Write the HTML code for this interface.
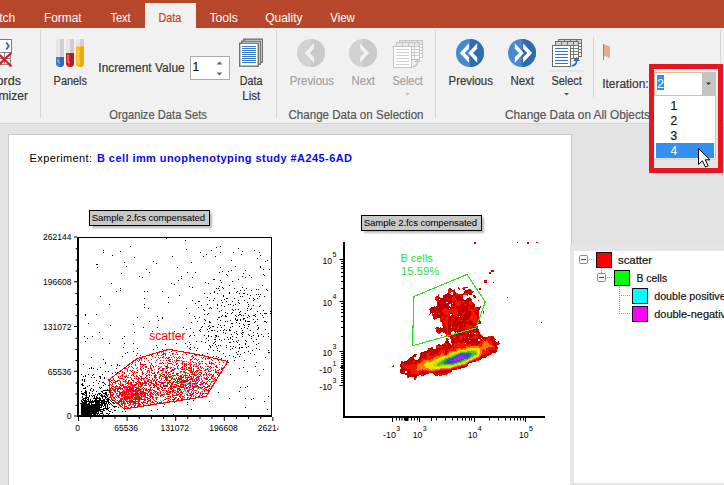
<!DOCTYPE html>
<html><head><meta charset="utf-8"><style>
html,body{margin:0;padding:0;width:724px;height:485px;overflow:hidden;background:#fff}
svg{display:block;font-family:"Liberation Sans",sans-serif}
</style></head><body>
<svg width="724" height="485" viewBox="0 0 724 485">
<rect x="0" y="0" width="724" height="28" fill="#B7472A"/>
<rect x="145" y="3" width="51" height="25" fill="#F1F1F1"/>
<text x="-7.5" y="21.8" font-size="12" fill="#fff" >atch</text>
<text x="44" y="21.8" font-size="12" fill="#FFFFFF" textLength="37.6" lengthAdjust="spacingAndGlyphs" >Format</text>
<text x="110.4" y="21.8" font-size="12" fill="#FFFFFF" textLength="20.3" lengthAdjust="spacingAndGlyphs" >Text</text>
<text x="158.4" y="21.8" font-size="12" fill="#B7472A" stroke="#B7472A" stroke-width="0.2" textLength="22.8" lengthAdjust="spacingAndGlyphs" >Data</text>
<text x="209.5" y="21.8" font-size="12" fill="#FFFFFF" textLength="28.3" lengthAdjust="spacingAndGlyphs" >Tools</text>
<text x="265.2" y="21.8" font-size="12" fill="#FFFFFF" textLength="37.3" lengthAdjust="spacingAndGlyphs" >Quality</text>
<text x="330.3" y="21.8" font-size="12" fill="#FFFFFF" textLength="24.4" lengthAdjust="spacingAndGlyphs" >View</text>
<rect x="0" y="28" width="724" height="96" fill="#F1F1F1"/>
<rect x="0" y="123" width="724" height="1" fill="#D4D4D4"/>
<rect x="40" y="30" width="1" height="88" fill="#D6D6D6"/>
<rect x="276" y="30" width="1" height="88" fill="#D6D6D6"/>
<rect x="435" y="30" width="1" height="88" fill="#D6D6D6"/>
<rect x="593" y="37" width="1" height="60" fill="#D6D6D6"/>
<rect x="720" y="30" width="1" height="88" fill="#D6D6D6"/>
<rect x="-4.5" y="39.5" width="16" height="13" fill="#fff" stroke="#7a7a7a"/>
<path d="M6.2 42.5 L8.8 46 L6.2 49.5" fill="none" stroke="#2E6FBF" stroke-width="1.9"/>
<rect x="-4.5" y="52.5" width="15" height="12" fill="#fff" stroke="#8a8a8a"/>
<path d="M-4 58.5H10M4.5 52.5V64.5" stroke="#8a8a8a" stroke-width="1"/>
<path d="M-2.5 53 L11.5 66.5 M11.2 53 L-2.5 66" stroke="#D0202C" stroke-width="2.4"/>
<text x="-3.5" y="85" font-size="12" fill="#363636" stroke="#363636" stroke-width="0.2" textLength="24.5" lengthAdjust="spacingAndGlyphs" >ords</text>
<text x="-1.5" y="100.2" font-size="12" fill="#363636" stroke="#363636" stroke-width="0.2" textLength="29.5" lengthAdjust="spacingAndGlyphs" >mizer</text>
<path d="M56 39 h8 v24 a4 4 0 0 1 -8 0 z" fill="#E6E6E6"/><path d="M60 39 h4 v24 a4 4 0 0 1 -4 4 z" fill="#CFCFCF"/><path d="M56 57 h8 v6 a4 4 0 0 1 -8 0 z" fill="#3B7CC9"/><path d="M60 57 h4 v6 a4 4 0 0 1 -4 4 z" fill="#2F68B0" opacity="0.9"/><path d="M58 59 v2 a2 2 0 0 0 2 2" fill="none" stroke="#fff" stroke-opacity="0.55" stroke-width="1"/>
<path d="M66 39 h8 v24 a4 4 0 0 1 -8 0 z" fill="#E6E6E6"/><path d="M70 39 h4 v24 a4 4 0 0 1 -4 4 z" fill="#CFCFCF"/><path d="M66 53 h8 v10 a4 4 0 0 1 -8 0 z" fill="#D0252F"/><path d="M70 53 h4 v10 a4 4 0 0 1 -4 4 z" fill="#B01C25" opacity="0.9"/><path d="M68 55 v6 a2 2 0 0 0 2 2" fill="none" stroke="#fff" stroke-opacity="0.55" stroke-width="1"/>
<path d="M76 39 h8 v24 a4 4 0 0 1 -8 0 z" fill="#E6E6E6"/><path d="M80 39 h4 v24 a4 4 0 0 1 -4 4 z" fill="#CFCFCF"/><path d="M76 46.5 h8 v16.5 a4 4 0 0 1 -8 0 z" fill="#FDB913"/><path d="M80 46.5 h4 v16.5 a4 4 0 0 1 -4 4 z" fill="#F0A800" opacity="0.9"/><path d="M78 48.5 v12.5 a2 2 0 0 0 2 2" fill="none" stroke="#fff" stroke-opacity="0.55" stroke-width="1"/>
<text x="53.6" y="84.8" font-size="12" fill="#363636" stroke="#363636" stroke-width="0.2" textLength="33.4" lengthAdjust="spacingAndGlyphs" >Panels</text>
<text x="98.3" y="72" font-size="12" fill="#363636" stroke="#363636" stroke-width="0.2" textLength="86.5" lengthAdjust="spacingAndGlyphs" >Increment Value</text>
<rect x="190.5" y="56.5" width="39" height="23" fill="#fff" stroke="#ABABAB"/>
<text x="192.6" y="70.8" font-size="12" fill="#111" stroke="#111" stroke-width="0.2" >1</text>
<path d="M216.5 64.5 L219.5 61.5 L222.5 64.5 Z" fill="#666"/>
<path d="M216.5 72.5 L219.5 75.5 L222.5 72.5 Z" fill="#666"/>
<rect x="243.7" y="39.2" width="18.6" height="23" fill="#fff" stroke="#737373" stroke-width="1.4"/>
<rect x="241.7" y="41.2" width="18.6" height="23" fill="#fff" stroke="#737373" stroke-width="1.4"/>
<rect x="239.7" y="43.2" width="18.6" height="23" fill="#fff" stroke="#737373" stroke-width="1.4"/>
<path d="M242 46.5h14M242 48.5h14M242 50.5h14M242 52.5h14M242 54.5h14M242 56.5h14M242 58.5h14M242 60.5h14M242 62.5h14" stroke="#3A7BC8" stroke-width="1"/>
<text x="239.8" y="84.8" font-size="12" fill="#363636" stroke="#363636" stroke-width="0.2" textLength="22.7" lengthAdjust="spacingAndGlyphs" >Data</text>
<text x="242.3" y="100.2" font-size="12" fill="#363636" stroke="#363636" stroke-width="0.2" textLength="18" lengthAdjust="spacingAndGlyphs" >List</text>
<text x="109.3" y="119" font-size="12" fill="#565656" stroke="#565656" stroke-width="0.2" textLength="97.6" lengthAdjust="spacingAndGlyphs" >Organize Data Sets</text>
<g transform="translate(311,53)"><circle r="14" fill="#D2D2D2"/><path d="M0 -14 A14 14 0 0 1 0 14 Z" fill="#CACACA"/><path d="M-6.1 0 L2.9000000000000004 -9.7 V-4.3 L-1.3999999999999995 0 L2.9000000000000004 4.3 V9.7 Z" fill="#F3F3F3"/></g>
<g transform="translate(363,53) scale(-1,1)"><circle r="14" fill="#D2D2D2"/><path d="M0 -14 A14 14 0 0 0 0 14 Z" fill="#CACACA"/><path d="M-6.1 0 L2.9000000000000004 -9.7 V-4.3 L-1.3999999999999995 0 L2.9000000000000004 4.3 V9.7 Z" fill="#F3F3F3"/></g>
<text x="289.7" y="84.8" font-size="12" fill="#A3A3A3" stroke="#A3A3A3" stroke-width="0.2" textLength="44.3" lengthAdjust="spacingAndGlyphs" >Previous</text>
<text x="351.5" y="85" font-size="12" fill="#A3A3A3" stroke="#A3A3A3" stroke-width="0.2" textLength="23.4" lengthAdjust="spacingAndGlyphs" >Next</text>
<g transform="translate(393,40)"><rect x="6.5" y="0.5" width="23" height="17" fill="#fff" stroke="#C4C4C4"/><rect x="7" y="1" width="22" height="3" fill="#E6E6E6"/><path d="M7 4.5h22M7 7.5h22M7 10.5h22M7 13.5h22M12.5 1v16M18.5 1v16M24.5 1v16" stroke="#C4C4C4" stroke-width="0.9"/><rect x="3.5" y="2.5" width="23" height="17" fill="#fff" stroke="#C4C4C4"/><rect x="4" y="3" width="22" height="3" fill="#E6E6E6"/><path d="M4 6.5h22M4 9.5h22M4 12.5h22M4 15.5h22M9.5 3v16M15.5 3v16M21.5 3v16" stroke="#C4C4C4" stroke-width="0.9"/><rect x="0.5" y="6.5" width="18" height="21" fill="#fff" stroke="#C4C4C4"/><path d="M3 9.5h13M3 12.5h13M3 15.5h13M3 18.5h13M3 21.5h13M3 24.5h13" stroke="#D0D0D0" stroke-width="1"/><path d="M19.5 27 Q25 26 24.5 21" fill="none" stroke="#C8C8C8" stroke-width="1.6"/><path d="M21 22 L24.5 18 L28 22 Z" fill="#C8C8C8"/></g>
<text x="392.5" y="85" font-size="12" fill="#A3A3A3" stroke="#A3A3A3" stroke-width="0.2" textLength="30.4" lengthAdjust="spacingAndGlyphs" >Select</text>
<path d="M405 93 h5 l-2.5 2.5 z" fill="#BDBDBD"/>
<text x="288.5" y="119" font-size="12" fill="#565656" stroke="#565656" stroke-width="0.2" textLength="135" lengthAdjust="spacingAndGlyphs" >Change Data on Selection</text>
<g transform="translate(470,53)"><circle r="14" fill="#4A88CC"/><path d="M0 -14 A14 14 0 0 1 0 14 Z" fill="#2F6DB0"/><path d="M-10.1 0 L-1.0999999999999996 -9.7 V-4.3 L-5.3999999999999995 0 L-1.0999999999999996 4.3 V9.7 Z" fill="#FFFFFF"/><path d="M-1.8 0 L7.2 -9.7 V-4.3 L2.9000000000000004 0 L7.2 4.3 V9.7 Z" fill="#FFFFFF"/></g>
<g transform="translate(522,53) scale(-1,1)"><circle r="14" fill="#4A88CC"/><path d="M0 -14 A14 14 0 0 0 0 14 Z" fill="#2F6DB0"/><path d="M-10.1 0 L-1.0999999999999996 -9.7 V-4.3 L-5.3999999999999995 0 L-1.0999999999999996 4.3 V9.7 Z" fill="#FFFFFF"/><path d="M-1.8 0 L7.2 -9.7 V-4.3 L2.9000000000000004 0 L7.2 4.3 V9.7 Z" fill="#FFFFFF"/></g>
<text x="448.6" y="84.6" font-size="12" fill="#363636" stroke="#363636" stroke-width="0.2" textLength="44.3" lengthAdjust="spacingAndGlyphs" >Previous</text>
<text x="510.4" y="84.6" font-size="12" fill="#363636" stroke="#363636" stroke-width="0.2" textLength="23.5" lengthAdjust="spacingAndGlyphs" >Next</text>
<g transform="translate(552,39)"><rect x="6.5" y="0.5" width="23" height="17" fill="#fff" stroke="#6E6E6E"/><rect x="7" y="1" width="22" height="3" fill="#D0D0D0"/><path d="M7 4.5h22M7 7.5h22M7 10.5h22M7 13.5h22M12.5 1v16M18.5 1v16M24.5 1v16" stroke="#6E6E6E" stroke-width="0.9"/><rect x="3.5" y="2.5" width="23" height="17" fill="#fff" stroke="#6E6E6E"/><rect x="4" y="3" width="22" height="3" fill="#D0D0D0"/><path d="M4 6.5h22M4 9.5h22M4 12.5h22M4 15.5h22M9.5 3v16M15.5 3v16M21.5 3v16" stroke="#6E6E6E" stroke-width="0.9"/><rect x="0.5" y="6.5" width="18" height="21" fill="#fff" stroke="#6E6E6E"/><path d="M3 9.5h13M3 12.5h13M3 15.5h13M3 18.5h13M3 21.5h13M3 24.5h13" stroke="#3474C4" stroke-width="1"/><path d="M19.5 27 Q25 26 24.5 21" fill="none" stroke="#2A6EC0" stroke-width="1.6"/><path d="M21 22 L24.5 18 L28 22 Z" fill="#2A6EC0"/></g>
<rect x="549" y="70.5" width="35" height="1" fill="#DCDCDC"/>
<text x="551.5" y="84.6" font-size="12" fill="#363636" stroke="#363636" stroke-width="0.2" textLength="30.2" lengthAdjust="spacingAndGlyphs" >Select</text>
<path d="M564 93 h5 l-2.5 2.5 z" fill="#555"/>
<text x="505" y="119" font-size="12" fill="#565656" stroke="#565656" stroke-width="0.2" textLength="145" lengthAdjust="spacingAndGlyphs" >Change Data on All Objects</text>
<rect x="603" y="44" width="1" height="16" fill="#7A8CA0"/>
<path d="M604 44.5 L610 46.5 V58 L604 56 Z" fill="#E9AA88"/>
<text x="602.2" y="88.3" font-size="12" fill="#363636" stroke="#363636" stroke-width="0.2" textLength="46.4" lengthAdjust="spacingAndGlyphs" >Iteration:</text>
<rect x="0" y="124" width="724" height="361" fill="#E3E3E3"/>
<rect x="8" y="134" width="564" height="360" fill="#C9C9C9"/>
<rect x="9" y="135" width="562" height="360" fill="#FFFFFF"/>
<g>
<path d="M166 238h1v1h-1zM185 240h1v1h-1zM130 246h1v1h-1zM220 246h1v1h-1zM216 247h1v1h-1zM238 248h1v1h-1zM186 249h1v1h-1zM271 249h1v1h-1zM103 250h1v1h-1zM211 250h1v1h-1zM254 250h1v1h-1zM120 251h1v1h-1zM242 251h1v1h-1zM271 251h1v1h-1zM103 252h1v1h-1zM200 252h1v1h-1zM220 252h1v1h-1zM233 252h1v1h-1zM259 252h1v1h-1zM206 254h1v1h-1zM241 254h1v1h-1zM112 255h1v1h-1zM260 255h1v1h-1zM172 256h1v1h-1zM203 256h1v1h-1zM215 256h1v1h-1zM134 257h1v1h-1zM257 258h1v1h-1zM271 258h1v1h-1zM271 259h1v1h-1zM231 260h1v1h-1zM267 260h1v1h-1zM153 261h1v1h-1zM265 261h1v1h-1zM124 262h1v1h-1zM191 262h1v1h-1zM156 263h1v1h-1zM96 264h1v1h-1zM97 264h1v1h-1zM126 266h1v1h-1zM235 266h1v1h-1zM260 266h1v1h-1zM97 267h1v1h-1zM177 267h1v1h-1zM220 267h1v1h-1zM260 267h1v1h-1zM146 269h1v1h-1zM263 269h1v1h-1zM269 269h1v1h-1zM231 270h1v1h-1zM245 270h1v1h-1zM222 271h1v1h-1zM228 271h1v1h-1zM149 272h1v1h-1zM187 272h1v1h-1zM195 272h1v1h-1zM219 272h1v1h-1zM121 273h1v1h-1zM243 273h1v1h-1zM271 273h1v1h-1zM226 274h1v1h-1zM263 274h1v1h-1zM271 274h1v1h-1zM227 275h1v1h-1zM249 275h1v1h-1zM264 275h1v1h-1zM139 276h1v1h-1zM181 276h1v1h-1zM242 276h1v1h-1zM142 277h1v1h-1zM192 277h1v1h-1zM245 277h1v1h-1zM251 277h1v1h-1zM181 278h1v1h-1zM213 279h1v1h-1zM214 279h1v1h-1zM238 279h1v1h-1zM271 279h1v1h-1zM178 280h1v1h-1zM220 280h1v1h-1zM232 281h1v1h-1zM271 281h1v1h-1zM205 282h1v1h-1zM221 282h1v1h-1zM111 283h1v1h-1zM171 283h1v1h-1zM208 283h1v1h-1zM271 283h1v1h-1zM174 284h1v1h-1zM229 285h1v1h-1zM262 285h1v1h-1zM189 286h1v1h-1zM219 286h1v1h-1zM192 287h1v1h-1zM222 287h1v1h-1zM242 287h1v1h-1zM271 287h1v1h-1zM120 288h1v1h-1zM216 288h1v1h-1zM218 288h1v1h-1zM223 288h1v1h-1zM234 288h1v1h-1zM246 288h1v1h-1zM256 289h1v1h-1zM258 289h1v1h-1zM266 289h1v1h-1zM271 289h1v1h-1zM120 290h1v1h-1zM219 290h1v1h-1zM240 290h1v1h-1zM244 290h1v1h-1zM251 290h1v1h-1zM267 290h1v1h-1zM271 290h1v1h-1zM116 291h1v1h-1zM144 291h1v1h-1zM147 291h1v1h-1zM162 291h1v1h-1zM214 291h1v1h-1zM237 291h1v1h-1zM214 292h1v1h-1zM229 292h1v1h-1zM236 292h1v1h-1zM271 292h1v1h-1zM204 293h1v1h-1zM210 293h1v1h-1zM217 293h1v1h-1zM229 293h1v1h-1zM239 293h1v1h-1zM243 293h1v1h-1zM244 293h1v1h-1zM247 294h1v1h-1zM256 294h1v1h-1zM258 294h1v1h-1zM260 294h1v1h-1zM179 295h1v1h-1zM223 295h1v1h-1zM250 295h1v1h-1zM100 296h1v1h-1zM223 296h1v1h-1zM240 296h1v1h-1zM242 296h1v1h-1zM259 296h1v1h-1zM264 296h1v1h-1zM168 297h1v1h-1zM207 297h1v1h-1zM144 298h1v1h-1zM214 298h1v1h-1zM226 298h1v1h-1zM227 298h1v1h-1zM234 298h1v1h-1zM249 298h1v1h-1zM253 298h1v1h-1zM257 298h1v1h-1zM224 299h1v1h-1zM254 299h1v1h-1zM192 300h1v1h-1zM209 300h1v1h-1zM213 300h1v1h-1zM221 300h1v1h-1zM238 300h1v1h-1zM244 300h1v1h-1zM253 300h1v1h-1zM271 300h1v1h-1zM198 301h1v1h-1zM199 301h1v1h-1zM226 301h1v1h-1zM232 301h1v1h-1zM168 302h1v1h-1zM222 302h1v1h-1zM238 302h1v1h-1zM247 302h1v1h-1zM195 303h1v1h-1zM239 303h1v1h-1zM109 304h1v1h-1zM144 304h1v1h-1zM207 304h1v1h-1zM217 304h1v1h-1zM228 304h1v1h-1zM230 304h1v1h-1zM235 304h1v1h-1zM248 304h1v1h-1zM271 304h1v1h-1zM201 305h1v1h-1zM217 305h1v1h-1zM221 305h1v1h-1zM233 305h1v1h-1zM253 305h1v1h-1zM260 305h1v1h-1zM271 305h1v1h-1zM224 306h1v1h-1zM248 306h1v1h-1zM259 306h1v1h-1zM271 306h1v1h-1zM144 307h1v1h-1zM198 307h1v1h-1zM210 307h1v1h-1zM148 308h1v1h-1zM186 308h1v1h-1zM209 308h1v1h-1zM211 308h1v1h-1zM217 308h1v1h-1zM247 308h1v1h-1zM251 308h1v1h-1zM271 308h1v1h-1zM203 309h1v1h-1zM232 309h1v1h-1zM235 309h1v1h-1zM238 309h1v1h-1zM250 309h1v1h-1zM204 310h1v1h-1zM221 310h1v1h-1zM233 310h1v1h-1zM247 310h1v1h-1zM263 310h1v1h-1zM271 310h1v1h-1zM219 311h1v1h-1zM240 311h1v1h-1zM257 311h1v1h-1zM270 311h1v1h-1zM225 312h1v1h-1zM232 312h1v1h-1zM239 312h1v1h-1zM189 313h1v1h-1zM208 313h1v1h-1zM227 313h1v1h-1zM231 313h1v1h-1zM245 313h1v1h-1zM260 313h1v1h-1zM264 313h1v1h-1zM265 313h1v1h-1zM266 313h1v1h-1zM270 313h1v1h-1zM85 314h1v1h-1zM96 314h1v1h-1zM204 314h1v1h-1zM207 314h1v1h-1zM239 314h1v1h-1zM240 314h1v1h-1zM255 314h1v1h-1zM271 314h1v1h-1zM85 315h1v1h-1zM222 315h1v1h-1zM225 315h1v1h-1zM235 315h1v1h-1zM238 315h1v1h-1zM241 315h1v1h-1zM243 315h1v1h-1zM248 315h1v1h-1zM253 315h1v1h-1zM254 315h1v1h-1zM262 315h1v1h-1zM157 316h1v1h-1zM194 316h1v1h-1zM221 316h1v1h-1zM225 316h1v1h-1zM226 316h1v1h-1zM236 316h1v1h-1zM249 316h1v1h-1zM255 316h1v1h-1zM137 317h1v1h-1zM162 317h1v1h-1zM199 317h1v1h-1zM218 317h1v1h-1zM219 317h1v1h-1zM247 317h1v1h-1zM263 317h1v1h-1zM162 318h1v1h-1zM195 318h1v1h-1zM235 318h1v1h-1zM243 318h1v1h-1zM244 318h1v1h-1zM204 319h1v1h-1zM217 319h1v1h-1zM235 319h1v1h-1zM237 319h1v1h-1zM240 319h1v1h-1zM243 319h1v1h-1zM253 319h1v1h-1zM257 319h1v1h-1zM271 319h1v1h-1zM158 320h1v1h-1zM205 320h1v1h-1zM220 320h1v1h-1zM230 320h1v1h-1zM236 320h1v1h-1zM237 320h1v1h-1zM240 320h1v1h-1zM245 320h1v1h-1zM149 321h1v1h-1zM197 321h1v1h-1zM209 321h1v1h-1zM225 321h1v1h-1zM227 321h1v1h-1zM245 321h1v1h-1zM247 321h1v1h-1zM248 321h1v1h-1zM249 321h1v1h-1zM255 321h1v1h-1zM264 321h1v1h-1zM265 321h1v1h-1zM271 321h1v1h-1zM191 322h1v1h-1zM209 322h1v1h-1zM210 322h1v1h-1zM236 322h1v1h-1zM254 322h1v1h-1zM266 322h1v1h-1zM88 323h1v1h-1zM204 323h1v1h-1zM231 323h1v1h-1zM232 323h1v1h-1zM239 323h1v1h-1zM133 324h1v1h-1zM218 324h1v1h-1zM243 324h1v1h-1zM248 324h1v1h-1zM249 324h1v1h-1zM110 325h1v1h-1zM209 325h1v1h-1zM220 325h1v1h-1zM224 325h1v1h-1zM244 325h1v1h-1zM257 325h1v1h-1zM271 325h1v1h-1zM202 326h1v1h-1zM208 326h1v1h-1zM212 326h1v1h-1zM213 326h1v1h-1zM232 326h1v1h-1zM239 326h1v1h-1zM248 326h1v1h-1zM143 327h1v1h-1zM157 327h1v1h-1zM183 327h1v1h-1zM201 327h1v1h-1zM210 327h1v1h-1zM217 327h1v1h-1zM221 327h1v1h-1zM230 327h1v1h-1zM244 327h1v1h-1zM258 327h1v1h-1zM190 328h1v1h-1zM209 328h1v1h-1zM241 328h1v1h-1zM247 328h1v1h-1zM258 328h1v1h-1zM186 329h1v1h-1zM200 329h1v1h-1zM207 329h1v1h-1zM224 329h1v1h-1zM229 329h1v1h-1zM257 329h1v1h-1zM265 329h1v1h-1zM271 329h1v1h-1zM199 330h1v1h-1zM211 330h1v1h-1zM212 330h1v1h-1zM214 330h1v1h-1zM220 330h1v1h-1zM223 330h1v1h-1zM226 330h1v1h-1zM229 330h1v1h-1zM230 330h1v1h-1zM242 330h1v1h-1zM250 330h1v1h-1zM152 331h1v1h-1zM174 331h1v1h-1zM200 331h1v1h-1zM208 331h1v1h-1zM217 331h1v1h-1zM236 331h1v1h-1zM99 332h1v1h-1zM134 332h1v1h-1zM193 332h1v1h-1zM223 332h1v1h-1zM234 332h1v1h-1zM242 332h1v1h-1zM243 332h1v1h-1zM253 332h1v1h-1zM225 333h1v1h-1zM236 333h1v1h-1zM241 333h1v1h-1zM257 333h1v1h-1zM268 333h1v1h-1zM271 333h1v1h-1zM231 334h1v1h-1zM237 334h1v1h-1zM242 334h1v1h-1zM248 334h1v1h-1zM261 334h1v1h-1zM271 334h1v1h-1zM190 335h1v1h-1zM194 335h1v1h-1zM204 335h1v1h-1zM208 335h1v1h-1zM215 335h1v1h-1zM216 335h1v1h-1zM249 335h1v1h-1zM253 335h1v1h-1zM258 335h1v1h-1zM84 336h1v1h-1zM92 336h1v1h-1zM124 336h1v1h-1zM189 336h1v1h-1zM208 336h1v1h-1zM211 336h1v1h-1zM216 336h1v1h-1zM218 336h1v1h-1zM232 336h1v1h-1zM242 336h1v1h-1zM251 336h1v1h-1zM258 336h1v1h-1zM263 336h1v1h-1zM268 336h1v1h-1zM215 337h1v1h-1zM227 337h1v1h-1zM230 337h1v1h-1zM236 337h1v1h-1zM271 337h1v1h-1zM87 338h1v1h-1zM102 338h1v1h-1zM122 338h1v1h-1zM206 338h1v1h-1zM230 338h1v1h-1zM251 338h1v1h-1zM214 339h1v1h-1zM215 339h1v1h-1zM219 339h1v1h-1zM224 339h1v1h-1zM228 339h1v1h-1zM232 339h1v1h-1zM256 339h1v1h-1zM270 339h1v1h-1zM208 340h1v1h-1zM221 340h1v1h-1zM238 340h1v1h-1zM245 340h1v1h-1zM85 341h1v1h-1zM196 341h1v1h-1zM201 341h1v1h-1zM215 341h1v1h-1zM233 341h1v1h-1zM236 341h1v1h-1zM246 341h1v1h-1zM253 341h1v1h-1zM189 342h1v1h-1zM205 342h1v1h-1zM214 342h1v1h-1zM229 342h1v1h-1zM230 342h1v1h-1zM237 342h1v1h-1zM109 343h1v1h-1zM124 343h1v1h-1zM133 343h1v1h-1zM176 343h1v1h-1zM185 343h1v1h-1zM213 343h1v1h-1zM245 343h1v1h-1zM258 343h1v1h-1zM165 344h1v1h-1zM190 344h1v1h-1zM215 344h1v1h-1zM239 344h1v1h-1zM245 344h1v1h-1zM256 344h1v1h-1zM271 344h1v1h-1zM156 345h1v1h-1zM209 345h1v1h-1zM212 345h1v1h-1zM218 345h1v1h-1zM220 345h1v1h-1zM226 345h1v1h-1zM187 346h1v1h-1zM210 346h1v1h-1zM216 346h1v1h-1zM230 346h1v1h-1zM233 346h1v1h-1zM248 346h1v1h-1zM271 346h1v1h-1zM123 347h1v1h-1zM157 347h1v1h-1zM190 347h1v1h-1zM194 347h1v1h-1zM210 347h1v1h-1zM226 347h1v1h-1zM235 347h1v1h-1zM239 347h1v1h-1zM241 347h1v1h-1zM242 347h1v1h-1zM246 347h1v1h-1zM137 348h1v1h-1zM189 348h1v1h-1zM197 348h1v1h-1zM217 348h1v1h-1zM232 348h1v1h-1zM239 348h1v1h-1zM256 348h1v1h-1zM153 349h1v1h-1zM162 349h1v1h-1zM190 349h1v1h-1zM208 349h1v1h-1zM230 349h1v1h-1zM259 349h1v1h-1zM271 349h1v1h-1zM164 350h1v1h-1zM196 350h1v1h-1zM213 350h1v1h-1zM217 350h1v1h-1zM252 350h1v1h-1zM268 350h1v1h-1zM133 351h1v1h-1zM160 351h1v1h-1zM181 351h1v1h-1zM219 351h1v1h-1zM238 351h1v1h-1zM248 351h1v1h-1zM127 352h1v1h-1zM236 352h1v1h-1zM244 352h1v1h-1zM268 352h1v1h-1zM269 352h1v1h-1zM125 353h1v1h-1zM137 353h1v1h-1zM153 353h1v1h-1zM207 353h1v1h-1zM223 353h1v1h-1zM250 353h1v1h-1zM271 353h1v1h-1zM149 354h1v1h-1zM150 354h1v1h-1zM202 354h1v1h-1zM237 354h1v1h-1zM240 354h1v1h-1zM254 354h1v1h-1zM136 355h1v1h-1zM140 355h1v1h-1zM229 355h1v1h-1zM122 356h1v1h-1zM213 356h1v1h-1zM216 356h1v1h-1zM225 356h1v1h-1zM233 356h1v1h-1zM239 356h1v1h-1zM91 357h1v1h-1zM218 357h1v1h-1zM235 357h1v1h-1zM265 357h1v1h-1zM221 358h1v1h-1zM103 359h1v1h-1zM133 360h1v1h-1zM227 360h1v1h-1zM234 360h1v1h-1zM244 360h1v1h-1zM271 361h1v1h-1zM105 362h1v1h-1zM228 362h1v1h-1zM256 362h1v1h-1zM105 363h1v1h-1zM83 364h1v1h-1zM117 364h1v1h-1zM111 365h1v1h-1zM117 365h1v1h-1zM119 365h1v1h-1zM255 366h1v1h-1zM91 367h1v1h-1zM100 367h1v1h-1zM243 367h1v1h-1zM89 368h1v1h-1zM91 368h1v1h-1zM93 368h1v1h-1zM116 368h1v1h-1zM239 368h1v1h-1zM271 368h1v1h-1zM97 369h1v1h-1zM263 369h1v1h-1zM120 370h1v1h-1zM105 371h1v1h-1zM108 371h1v1h-1zM247 371h1v1h-1zM115 372h1v1h-1zM117 372h1v1h-1zM112 373h1v1h-1zM81 374h1v1h-1zM88 374h1v1h-1zM93 374h1v1h-1zM102 374h1v1h-1zM230 374h1v1h-1zM271 374h1v1h-1zM85 375h1v1h-1zM92 375h1v1h-1zM259 375h1v1h-1zM83 376h1v1h-1zM85 376h1v1h-1zM99 376h1v1h-1zM100 376h1v1h-1zM91 377h1v1h-1zM94 377h1v1h-1zM100 377h1v1h-1zM104 377h1v1h-1zM100 378h1v1h-1zM104 378h1v1h-1zM82 379h1v1h-1zM84 379h1v1h-1zM108 379h1v1h-1zM271 379h1v1h-1zM82 380h1v1h-1zM84 380h1v1h-1zM96 380h1v1h-1zM271 380h1v1h-1zM84 381h1v1h-1zM99 381h1v1h-1zM271 381h1v1h-1zM93 382h1v1h-1zM102 382h1v1h-1zM103 382h1v1h-1zM271 382h1v1h-1zM82 383h1v1h-1zM98 383h1v1h-1zM104 383h1v1h-1zM81 384h1v1h-1zM82 384h1v1h-1zM105 384h1v1h-1zM271 384h1v1h-1zM82 385h1v1h-1zM83 385h1v1h-1zM89 385h1v1h-1zM93 385h1v1h-1zM103 385h1v1h-1zM108 385h1v1h-1zM87 386h1v1h-1zM247 386h1v1h-1zM85 387h1v1h-1zM99 387h1v1h-1zM101 387h1v1h-1zM240 387h1v1h-1zM245 387h1v1h-1zM83 388h1v1h-1zM84 388h1v1h-1zM85 388h1v1h-1zM91 388h1v1h-1zM100 388h1v1h-1zM90 389h1v1h-1zM93 389h1v1h-1zM107 389h1v1h-1zM85 390h1v1h-1zM90 390h1v1h-1zM93 390h1v1h-1zM103 390h1v1h-1zM104 390h1v1h-1zM105 390h1v1h-1zM106 390h1v1h-1zM107 390h1v1h-1zM108 390h1v1h-1zM109 390h1v1h-1zM81 391h1v1h-1zM85 391h1v1h-1zM86 391h1v1h-1zM92 391h1v1h-1zM96 391h1v1h-1zM101 391h1v1h-1zM102 391h1v1h-1zM109 391h1v1h-1zM239 391h1v1h-1zM84 392h1v1h-1zM85 392h1v1h-1zM86 392h1v1h-1zM89 392h1v1h-1zM102 392h1v1h-1zM105 392h1v1h-1zM106 392h1v1h-1zM109 392h1v1h-1zM218 392h1v1h-1zM271 392h1v1h-1zM81 393h1v1h-1zM82 393h1v1h-1zM83 393h1v1h-1zM85 393h1v1h-1zM86 393h1v1h-1zM89 393h1v1h-1zM92 393h1v1h-1zM98 393h1v1h-1zM99 393h1v1h-1zM100 393h1v1h-1zM103 393h1v1h-1zM104 393h1v1h-1zM105 393h1v1h-1zM106 393h1v1h-1zM271 393h1v1h-1zM82 394h1v1h-1zM83 394h1v1h-1zM84 394h1v1h-1zM86 394h1v1h-1zM95 394h1v1h-1zM97 394h1v1h-1zM99 394h1v1h-1zM101 394h1v1h-1zM105 394h1v1h-1zM106 394h1v1h-1zM108 394h1v1h-1zM110 394h1v1h-1zM271 394h1v1h-1zM85 395h1v1h-1zM86 395h1v1h-1zM89 395h1v1h-1zM91 395h1v1h-1zM93 395h1v1h-1zM94 395h1v1h-1zM97 395h1v1h-1zM100 395h1v1h-1zM101 395h1v1h-1zM102 395h1v1h-1zM104 395h1v1h-1zM106 395h1v1h-1zM107 395h1v1h-1zM110 395h1v1h-1zM271 395h1v1h-1zM82 396h1v1h-1zM86 396h1v1h-1zM89 396h1v1h-1zM92 396h1v1h-1zM94 396h1v1h-1zM96 396h1v1h-1zM101 396h1v1h-1zM102 396h1v1h-1zM103 396h1v1h-1zM104 396h1v1h-1zM105 396h1v1h-1zM107 396h1v1h-1zM268 396h1v1h-1zM82 397h1v1h-1zM85 397h1v1h-1zM86 397h1v1h-1zM87 397h1v1h-1zM88 397h1v1h-1zM94 397h1v1h-1zM96 397h1v1h-1zM97 397h1v1h-1zM99 397h1v1h-1zM102 397h1v1h-1zM105 397h1v1h-1zM106 397h1v1h-1zM109 397h1v1h-1zM110 397h1v1h-1zM83 398h1v1h-1zM84 398h1v1h-1zM85 398h1v1h-1zM86 398h1v1h-1zM88 398h1v1h-1zM93 398h1v1h-1zM94 398h1v1h-1zM95 398h1v1h-1zM96 398h1v1h-1zM97 398h1v1h-1zM98 398h1v1h-1zM99 398h1v1h-1zM100 398h1v1h-1zM102 398h1v1h-1zM105 398h1v1h-1zM107 398h1v1h-1zM108 398h1v1h-1zM229 398h1v1h-1zM245 398h1v1h-1zM253 398h1v1h-1zM82 399h1v1h-1zM83 399h1v1h-1zM85 399h1v1h-1zM87 399h1v1h-1zM88 399h1v1h-1zM90 399h1v1h-1zM95 399h1v1h-1zM96 399h1v1h-1zM99 399h1v1h-1zM100 399h1v1h-1zM103 399h1v1h-1zM104 399h1v1h-1zM106 399h1v1h-1zM107 399h1v1h-1zM108 399h1v1h-1zM109 399h1v1h-1zM251 399h1v1h-1zM81 400h1v1h-1zM83 400h1v1h-1zM84 400h1v1h-1zM85 400h1v1h-1zM86 400h1v1h-1zM88 400h1v1h-1zM90 400h1v1h-1zM92 400h1v1h-1zM94 400h1v1h-1zM95 400h1v1h-1zM96 400h1v1h-1zM97 400h1v1h-1zM98 400h1v1h-1zM99 400h1v1h-1zM100 400h1v1h-1zM101 400h1v1h-1zM102 400h1v1h-1zM103 400h1v1h-1zM104 400h1v1h-1zM107 400h1v1h-1zM108 400h1v1h-1zM110 400h1v1h-1zM112 400h1v1h-1zM193 400h1v1h-1zM81 401h1v1h-1zM82 401h1v1h-1zM84 401h1v1h-1zM85 401h1v1h-1zM86 401h1v1h-1zM87 401h1v1h-1zM88 401h1v1h-1zM89 401h1v1h-1zM90 401h1v1h-1zM91 401h1v1h-1zM92 401h1v1h-1zM93 401h1v1h-1zM94 401h1v1h-1zM95 401h1v1h-1zM96 401h1v1h-1zM97 401h1v1h-1zM98 401h1v1h-1zM99 401h1v1h-1zM101 401h1v1h-1zM102 401h1v1h-1zM103 401h1v1h-1zM104 401h1v1h-1zM105 401h1v1h-1zM106 401h1v1h-1zM107 401h1v1h-1zM108 401h1v1h-1zM111 401h1v1h-1zM209 401h1v1h-1zM264 401h1v1h-1zM82 402h1v1h-1zM83 402h1v1h-1zM84 402h1v1h-1zM85 402h1v1h-1zM86 402h1v1h-1zM89 402h1v1h-1zM90 402h1v1h-1zM91 402h1v1h-1zM92 402h1v1h-1zM93 402h1v1h-1zM95 402h1v1h-1zM96 402h1v1h-1zM97 402h1v1h-1zM98 402h1v1h-1zM99 402h1v1h-1zM100 402h1v1h-1zM101 402h1v1h-1zM102 402h1v1h-1zM103 402h1v1h-1zM104 402h1v1h-1zM106 402h1v1h-1zM108 402h1v1h-1zM109 402h1v1h-1zM112 402h1v1h-1zM113 402h1v1h-1zM174 402h1v1h-1zM187 402h1v1h-1zM80 403h1v1h-1zM81 403h1v1h-1zM82 403h1v1h-1zM83 403h1v1h-1zM84 403h1v1h-1zM85 403h1v1h-1zM86 403h1v1h-1zM88 403h1v1h-1zM89 403h1v1h-1zM91 403h1v1h-1zM95 403h1v1h-1zM96 403h1v1h-1zM97 403h1v1h-1zM98 403h1v1h-1zM99 403h1v1h-1zM101 403h1v1h-1zM102 403h1v1h-1zM103 403h1v1h-1zM104 403h1v1h-1zM105 403h1v1h-1zM106 403h1v1h-1zM108 403h1v1h-1zM110 403h1v1h-1zM113 403h1v1h-1zM114 403h1v1h-1zM81 404h1v1h-1zM82 404h1v1h-1zM83 404h1v1h-1zM84 404h1v1h-1zM85 404h1v1h-1zM86 404h1v1h-1zM87 404h1v1h-1zM88 404h1v1h-1zM89 404h1v1h-1zM91 404h1v1h-1zM92 404h1v1h-1zM93 404h1v1h-1zM94 404h1v1h-1zM95 404h1v1h-1zM96 404h1v1h-1zM97 404h1v1h-1zM98 404h1v1h-1zM99 404h1v1h-1zM100 404h1v1h-1zM101 404h1v1h-1zM102 404h1v1h-1zM104 404h1v1h-1zM105 404h1v1h-1zM107 404h1v1h-1zM109 404h1v1h-1zM111 404h1v1h-1zM164 404h1v1h-1zM187 404h1v1h-1zM81 405h1v1h-1zM82 405h1v1h-1zM83 405h1v1h-1zM84 405h1v1h-1zM85 405h1v1h-1zM86 405h1v1h-1zM87 405h1v1h-1zM88 405h1v1h-1zM89 405h1v1h-1zM90 405h1v1h-1zM91 405h1v1h-1zM92 405h1v1h-1zM93 405h1v1h-1zM94 405h1v1h-1zM95 405h1v1h-1zM96 405h1v1h-1zM97 405h1v1h-1zM98 405h1v1h-1zM99 405h1v1h-1zM100 405h1v1h-1zM101 405h1v1h-1zM102 405h1v1h-1zM104 405h1v1h-1zM105 405h1v1h-1zM107 405h1v1h-1zM112 405h1v1h-1zM81 406h1v1h-1zM82 406h1v1h-1zM83 406h1v1h-1zM84 406h1v1h-1zM85 406h1v1h-1zM86 406h1v1h-1zM87 406h1v1h-1zM88 406h1v1h-1zM89 406h1v1h-1zM90 406h1v1h-1zM91 406h1v1h-1zM92 406h1v1h-1zM93 406h1v1h-1zM94 406h1v1h-1zM95 406h1v1h-1zM96 406h1v1h-1zM97 406h1v1h-1zM98 406h1v1h-1zM99 406h1v1h-1zM101 406h1v1h-1zM103 406h1v1h-1zM105 406h1v1h-1zM107 406h1v1h-1zM113 406h1v1h-1zM114 406h1v1h-1zM115 406h1v1h-1zM116 406h1v1h-1zM163 406h1v1h-1zM81 407h1v1h-1zM82 407h1v1h-1zM83 407h1v1h-1zM84 407h1v1h-1zM85 407h1v1h-1zM86 407h1v1h-1zM87 407h1v1h-1zM88 407h1v1h-1zM89 407h1v1h-1zM90 407h1v1h-1zM91 407h1v1h-1zM92 407h1v1h-1zM93 407h1v1h-1zM94 407h1v1h-1zM95 407h1v1h-1zM96 407h1v1h-1zM97 407h1v1h-1zM98 407h1v1h-1zM99 407h1v1h-1zM100 407h1v1h-1zM101 407h1v1h-1zM105 407h1v1h-1zM107 407h1v1h-1zM109 407h1v1h-1zM114 407h1v1h-1zM118 407h1v1h-1zM245 407h1v1h-1zM81 408h1v1h-1zM82 408h1v1h-1zM83 408h1v1h-1zM84 408h1v1h-1zM85 408h1v1h-1zM86 408h1v1h-1zM87 408h1v1h-1zM88 408h1v1h-1zM89 408h1v1h-1zM90 408h1v1h-1zM91 408h1v1h-1zM92 408h1v1h-1zM93 408h1v1h-1zM94 408h1v1h-1zM95 408h1v1h-1zM96 408h1v1h-1zM97 408h1v1h-1zM98 408h1v1h-1zM99 408h1v1h-1zM103 408h1v1h-1zM104 408h1v1h-1zM105 408h1v1h-1zM106 408h1v1h-1zM107 408h1v1h-1zM108 408h1v1h-1zM81 409h1v1h-1zM82 409h1v1h-1zM83 409h1v1h-1zM84 409h1v1h-1zM85 409h1v1h-1zM86 409h1v1h-1zM87 409h1v1h-1zM88 409h1v1h-1zM89 409h1v1h-1zM90 409h1v1h-1zM91 409h1v1h-1zM92 409h1v1h-1zM93 409h1v1h-1zM94 409h1v1h-1zM95 409h1v1h-1zM96 409h1v1h-1zM97 409h1v1h-1zM98 409h1v1h-1zM99 409h1v1h-1zM100 409h1v1h-1zM101 409h1v1h-1zM102 409h1v1h-1zM103 409h1v1h-1zM106 409h1v1h-1zM107 409h1v1h-1zM111 409h1v1h-1zM157 409h1v1h-1zM191 409h1v1h-1zM267 409h1v1h-1zM81 410h1v1h-1zM82 410h1v1h-1zM83 410h1v1h-1zM84 410h1v1h-1zM85 410h1v1h-1zM86 410h1v1h-1zM87 410h1v1h-1zM88 410h1v1h-1zM89 410h1v1h-1zM90 410h1v1h-1zM91 410h1v1h-1zM92 410h1v1h-1zM93 410h1v1h-1zM94 410h1v1h-1zM95 410h1v1h-1zM96 410h1v1h-1zM97 410h1v1h-1zM98 410h1v1h-1zM99 410h1v1h-1zM100 410h1v1h-1zM103 410h1v1h-1zM104 410h1v1h-1zM108 410h1v1h-1zM114 410h1v1h-1zM115 410h1v1h-1zM151 410h1v1h-1zM81 411h1v1h-1zM82 411h1v1h-1zM83 411h1v1h-1zM84 411h1v1h-1zM85 411h1v1h-1zM86 411h1v1h-1zM87 411h1v1h-1zM88 411h1v1h-1zM89 411h1v1h-1zM90 411h1v1h-1zM91 411h1v1h-1zM92 411h1v1h-1zM93 411h1v1h-1zM94 411h1v1h-1zM95 411h1v1h-1zM96 411h1v1h-1zM97 411h1v1h-1zM98 411h1v1h-1zM100 411h1v1h-1zM101 411h1v1h-1zM102 411h1v1h-1zM109 411h1v1h-1zM110 411h1v1h-1zM122 411h1v1h-1zM125 411h1v1h-1zM81 412h1v1h-1zM82 412h1v1h-1zM83 412h1v1h-1zM84 412h1v1h-1zM85 412h1v1h-1zM86 412h1v1h-1zM87 412h1v1h-1zM88 412h1v1h-1zM89 412h1v1h-1zM90 412h1v1h-1zM91 412h1v1h-1zM92 412h1v1h-1zM93 412h1v1h-1zM94 412h1v1h-1zM95 412h1v1h-1zM96 412h1v1h-1zM98 412h1v1h-1zM102 412h1v1h-1zM112 412h1v1h-1zM81 413h1v1h-1zM82 413h1v1h-1zM83 413h1v1h-1zM84 413h1v1h-1zM85 413h1v1h-1zM86 413h1v1h-1zM87 413h1v1h-1zM88 413h1v1h-1zM89 413h1v1h-1zM90 413h1v1h-1zM91 413h1v1h-1zM92 413h1v1h-1zM93 413h1v1h-1zM94 413h1v1h-1zM95 413h1v1h-1zM96 413h1v1h-1zM97 413h1v1h-1zM98 413h1v1h-1zM100 413h1v1h-1zM101 413h1v1h-1zM102 413h1v1h-1zM106 413h1v1h-1zM107 413h1v1h-1zM109 413h1v1h-1zM81 414h1v1h-1zM82 414h1v1h-1zM83 414h1v1h-1zM84 414h1v1h-1zM85 414h1v1h-1zM86 414h1v1h-1zM87 414h1v1h-1zM88 414h1v1h-1zM89 414h1v1h-1zM90 414h1v1h-1zM91 414h1v1h-1zM93 414h1v1h-1zM94 414h1v1h-1zM95 414h1v1h-1zM97 414h1v1h-1zM99 414h1v1h-1zM103 414h1v1h-1zM108 414h1v1h-1zM173 414h1v1h-1zM81 415h1v1h-1zM82 415h1v1h-1zM83 415h1v1h-1zM84 415h1v1h-1zM85 415h1v1h-1zM86 415h1v1h-1zM87 415h1v1h-1zM88 415h1v1h-1zM89 415h1v1h-1zM90 415h1v1h-1zM91 415h1v1h-1zM92 415h1v1h-1zM93 415h1v1h-1zM94 415h1v1h-1zM95 415h1v1h-1zM96 415h1v1h-1zM98 415h1v1h-1zM99 415h1v1h-1zM100 415h1v1h-1zM102 415h1v1h-1zM132 415h1v1h-1z" fill="#000"/>
<path d="M166 350h1v1h-1zM163 351h1v1h-1zM171 351h1v1h-1zM178 351h1v1h-1zM161 352h1v1h-1zM169 352h1v1h-1zM176 352h1v1h-1zM183 352h1v1h-1zM155 353h1v1h-1zM157 353h1v1h-1zM163 353h1v1h-1zM164 353h1v1h-1zM165 353h1v1h-1zM172 353h1v1h-1zM173 353h1v1h-1zM151 354h1v1h-1zM157 354h1v1h-1zM162 354h1v1h-1zM163 354h1v1h-1zM165 354h1v1h-1zM172 354h1v1h-1zM175 354h1v1h-1zM177 354h1v1h-1zM182 354h1v1h-1zM186 354h1v1h-1zM194 354h1v1h-1zM151 355h1v1h-1zM156 355h1v1h-1zM158 355h1v1h-1zM165 355h1v1h-1zM170 355h1v1h-1zM192 355h1v1h-1zM195 355h1v1h-1zM196 355h1v1h-1zM199 355h1v1h-1zM152 356h1v1h-1zM163 356h1v1h-1zM173 356h1v1h-1zM179 356h1v1h-1zM191 356h1v1h-1zM155 357h1v1h-1zM158 357h1v1h-1zM160 357h1v1h-1zM162 357h1v1h-1zM163 357h1v1h-1zM166 357h1v1h-1zM168 357h1v1h-1zM169 357h1v1h-1zM171 357h1v1h-1zM174 357h1v1h-1zM176 357h1v1h-1zM178 357h1v1h-1zM180 357h1v1h-1zM182 357h1v1h-1zM193 357h1v1h-1zM201 357h1v1h-1zM203 357h1v1h-1zM140 358h1v1h-1zM141 358h1v1h-1zM144 358h1v1h-1zM146 358h1v1h-1zM159 358h1v1h-1zM165 358h1v1h-1zM167 358h1v1h-1zM168 358h1v1h-1zM177 358h1v1h-1zM179 358h1v1h-1zM183 358h1v1h-1zM195 358h1v1h-1zM202 358h1v1h-1zM205 358h1v1h-1zM207 358h1v1h-1zM208 358h1v1h-1zM209 358h1v1h-1zM136 359h1v1h-1zM139 359h1v1h-1zM141 359h1v1h-1zM151 359h1v1h-1zM170 359h1v1h-1zM172 359h1v1h-1zM176 359h1v1h-1zM190 359h1v1h-1zM191 359h1v1h-1zM194 359h1v1h-1zM196 359h1v1h-1zM198 359h1v1h-1zM205 359h1v1h-1zM211 359h1v1h-1zM218 359h1v1h-1zM135 360h1v1h-1zM137 360h1v1h-1zM139 360h1v1h-1zM148 360h1v1h-1zM156 360h1v1h-1zM160 360h1v1h-1zM163 360h1v1h-1zM166 360h1v1h-1zM168 360h1v1h-1zM169 360h1v1h-1zM174 360h1v1h-1zM176 360h1v1h-1zM177 360h1v1h-1zM178 360h1v1h-1zM179 360h1v1h-1zM181 360h1v1h-1zM190 360h1v1h-1zM197 360h1v1h-1zM212 360h1v1h-1zM218 360h1v1h-1zM222 360h1v1h-1zM138 361h1v1h-1zM144 361h1v1h-1zM169 361h1v1h-1zM170 361h1v1h-1zM172 361h1v1h-1zM176 361h1v1h-1zM182 361h1v1h-1zM183 361h1v1h-1zM184 361h1v1h-1zM186 361h1v1h-1zM192 361h1v1h-1zM199 361h1v1h-1zM201 361h1v1h-1zM202 361h1v1h-1zM227 361h1v1h-1zM132 362h1v1h-1zM135 362h1v1h-1zM149 362h1v1h-1zM155 362h1v1h-1zM162 362h1v1h-1zM167 362h1v1h-1zM173 362h1v1h-1zM175 362h1v1h-1zM182 362h1v1h-1zM188 362h1v1h-1zM190 362h1v1h-1zM193 362h1v1h-1zM198 362h1v1h-1zM209 362h1v1h-1zM211 362h1v1h-1zM215 362h1v1h-1zM219 362h1v1h-1zM223 362h1v1h-1zM132 363h1v1h-1zM140 363h1v1h-1zM151 363h1v1h-1zM159 363h1v1h-1zM160 363h1v1h-1zM161 363h1v1h-1zM163 363h1v1h-1zM165 363h1v1h-1zM168 363h1v1h-1zM169 363h1v1h-1zM170 363h1v1h-1zM171 363h1v1h-1zM176 363h1v1h-1zM177 363h1v1h-1zM181 363h1v1h-1zM182 363h1v1h-1zM184 363h1v1h-1zM186 363h1v1h-1zM196 363h1v1h-1zM199 363h1v1h-1zM200 363h1v1h-1zM202 363h1v1h-1zM205 363h1v1h-1zM209 363h1v1h-1zM211 363h1v1h-1zM212 363h1v1h-1zM213 363h1v1h-1zM129 364h1v1h-1zM131 364h1v1h-1zM135 364h1v1h-1zM140 364h1v1h-1zM141 364h1v1h-1zM142 364h1v1h-1zM143 364h1v1h-1zM144 364h1v1h-1zM145 364h1v1h-1zM151 364h1v1h-1zM167 364h1v1h-1zM172 364h1v1h-1zM176 364h1v1h-1zM182 364h1v1h-1zM184 364h1v1h-1zM185 364h1v1h-1zM186 364h1v1h-1zM188 364h1v1h-1zM190 364h1v1h-1zM191 364h1v1h-1zM194 364h1v1h-1zM199 364h1v1h-1zM206 364h1v1h-1zM211 364h1v1h-1zM214 364h1v1h-1zM219 364h1v1h-1zM135 365h1v1h-1zM143 365h1v1h-1zM150 365h1v1h-1zM152 365h1v1h-1zM164 365h1v1h-1zM167 365h1v1h-1zM174 365h1v1h-1zM178 365h1v1h-1zM184 365h1v1h-1zM186 365h1v1h-1zM190 365h1v1h-1zM193 365h1v1h-1zM198 365h1v1h-1zM216 365h1v1h-1zM222 365h1v1h-1zM129 366h1v1h-1zM131 366h1v1h-1zM140 366h1v1h-1zM142 366h1v1h-1zM145 366h1v1h-1zM146 366h1v1h-1zM150 366h1v1h-1zM153 366h1v1h-1zM155 366h1v1h-1zM158 366h1v1h-1zM161 366h1v1h-1zM165 366h1v1h-1zM166 366h1v1h-1zM167 366h1v1h-1zM177 366h1v1h-1zM182 366h1v1h-1zM184 366h1v1h-1zM185 366h1v1h-1zM190 366h1v1h-1zM193 366h1v1h-1zM196 366h1v1h-1zM197 366h1v1h-1zM200 366h1v1h-1zM207 366h1v1h-1zM208 366h1v1h-1zM210 366h1v1h-1zM215 366h1v1h-1zM216 366h1v1h-1zM128 367h1v1h-1zM132 367h1v1h-1zM145 367h1v1h-1zM146 367h1v1h-1zM150 367h1v1h-1zM153 367h1v1h-1zM160 367h1v1h-1zM166 367h1v1h-1zM167 367h1v1h-1zM168 367h1v1h-1zM171 367h1v1h-1zM177 367h1v1h-1zM181 367h1v1h-1zM182 367h1v1h-1zM186 367h1v1h-1zM188 367h1v1h-1zM189 367h1v1h-1zM191 367h1v1h-1zM198 367h1v1h-1zM200 367h1v1h-1zM202 367h1v1h-1zM209 367h1v1h-1zM211 367h1v1h-1zM213 367h1v1h-1zM216 367h1v1h-1zM217 367h1v1h-1zM221 367h1v1h-1zM125 368h1v1h-1zM133 368h1v1h-1zM136 368h1v1h-1zM140 368h1v1h-1zM143 368h1v1h-1zM148 368h1v1h-1zM150 368h1v1h-1zM151 368h1v1h-1zM158 368h1v1h-1zM159 368h1v1h-1zM162 368h1v1h-1zM163 368h1v1h-1zM166 368h1v1h-1zM167 368h1v1h-1zM170 368h1v1h-1zM175 368h1v1h-1zM177 368h1v1h-1zM180 368h1v1h-1zM184 368h1v1h-1zM188 368h1v1h-1zM189 368h1v1h-1zM190 368h1v1h-1zM191 368h1v1h-1zM193 368h1v1h-1zM197 368h1v1h-1zM198 368h1v1h-1zM201 368h1v1h-1zM203 368h1v1h-1zM207 368h1v1h-1zM210 368h1v1h-1zM221 368h1v1h-1zM222 368h1v1h-1zM127 369h1v1h-1zM140 369h1v1h-1zM141 369h1v1h-1zM145 369h1v1h-1zM158 369h1v1h-1zM162 369h1v1h-1zM172 369h1v1h-1zM173 369h1v1h-1zM174 369h1v1h-1zM181 369h1v1h-1zM182 369h1v1h-1zM183 369h1v1h-1zM184 369h1v1h-1zM186 369h1v1h-1zM187 369h1v1h-1zM191 369h1v1h-1zM193 369h1v1h-1zM199 369h1v1h-1zM205 369h1v1h-1zM206 369h1v1h-1zM207 369h1v1h-1zM209 369h1v1h-1zM215 369h1v1h-1zM219 369h1v1h-1zM221 369h1v1h-1zM127 370h1v1h-1zM130 370h1v1h-1zM132 370h1v1h-1zM137 370h1v1h-1zM141 370h1v1h-1zM147 370h1v1h-1zM148 370h1v1h-1zM151 370h1v1h-1zM152 370h1v1h-1zM160 370h1v1h-1zM161 370h1v1h-1zM162 370h1v1h-1zM163 370h1v1h-1zM167 370h1v1h-1zM171 370h1v1h-1zM172 370h1v1h-1zM173 370h1v1h-1zM185 370h1v1h-1zM188 370h1v1h-1zM189 370h1v1h-1zM190 370h1v1h-1zM191 370h1v1h-1zM193 370h1v1h-1zM196 370h1v1h-1zM197 370h1v1h-1zM198 370h1v1h-1zM200 370h1v1h-1zM201 370h1v1h-1zM204 370h1v1h-1zM205 370h1v1h-1zM208 370h1v1h-1zM211 370h1v1h-1zM213 370h1v1h-1zM217 370h1v1h-1zM218 370h1v1h-1zM122 371h1v1h-1zM131 371h1v1h-1zM134 371h1v1h-1zM142 371h1v1h-1zM147 371h1v1h-1zM149 371h1v1h-1zM158 371h1v1h-1zM165 371h1v1h-1zM166 371h1v1h-1zM170 371h1v1h-1zM171 371h1v1h-1zM180 371h1v1h-1zM181 371h1v1h-1zM183 371h1v1h-1zM184 371h1v1h-1zM190 371h1v1h-1zM192 371h1v1h-1zM195 371h1v1h-1zM208 371h1v1h-1zM210 371h1v1h-1zM216 371h1v1h-1zM122 372h1v1h-1zM124 372h1v1h-1zM132 372h1v1h-1zM134 372h1v1h-1zM136 372h1v1h-1zM137 372h1v1h-1zM142 372h1v1h-1zM147 372h1v1h-1zM149 372h1v1h-1zM151 372h1v1h-1zM154 372h1v1h-1zM157 372h1v1h-1zM158 372h1v1h-1zM162 372h1v1h-1zM165 372h1v1h-1zM166 372h1v1h-1zM168 372h1v1h-1zM169 372h1v1h-1zM173 372h1v1h-1zM180 372h1v1h-1zM184 372h1v1h-1zM185 372h1v1h-1zM190 372h1v1h-1zM191 372h1v1h-1zM192 372h1v1h-1zM194 372h1v1h-1zM196 372h1v1h-1zM199 372h1v1h-1zM200 372h1v1h-1zM201 372h1v1h-1zM205 372h1v1h-1zM215 372h1v1h-1zM216 372h1v1h-1zM217 372h1v1h-1zM218 372h1v1h-1zM119 373h1v1h-1zM124 373h1v1h-1zM129 373h1v1h-1zM133 373h1v1h-1zM142 373h1v1h-1zM143 373h1v1h-1zM146 373h1v1h-1zM152 373h1v1h-1zM153 373h1v1h-1zM154 373h1v1h-1zM157 373h1v1h-1zM161 373h1v1h-1zM166 373h1v1h-1zM168 373h1v1h-1zM172 373h1v1h-1zM173 373h1v1h-1zM176 373h1v1h-1zM177 373h1v1h-1zM178 373h1v1h-1zM185 373h1v1h-1zM187 373h1v1h-1zM188 373h1v1h-1zM192 373h1v1h-1zM194 373h1v1h-1zM198 373h1v1h-1zM201 373h1v1h-1zM206 373h1v1h-1zM209 373h1v1h-1zM218 373h1v1h-1zM219 373h1v1h-1zM122 374h1v1h-1zM132 374h1v1h-1zM133 374h1v1h-1zM142 374h1v1h-1zM145 374h1v1h-1zM148 374h1v1h-1zM149 374h1v1h-1zM155 374h1v1h-1zM162 374h1v1h-1zM163 374h1v1h-1zM164 374h1v1h-1zM167 374h1v1h-1zM169 374h1v1h-1zM170 374h1v1h-1zM176 374h1v1h-1zM177 374h1v1h-1zM182 374h1v1h-1zM189 374h1v1h-1zM191 374h1v1h-1zM192 374h1v1h-1zM193 374h1v1h-1zM194 374h1v1h-1zM197 374h1v1h-1zM199 374h1v1h-1zM200 374h1v1h-1zM203 374h1v1h-1zM204 374h1v1h-1zM206 374h1v1h-1zM208 374h1v1h-1zM210 374h1v1h-1zM211 374h1v1h-1zM213 374h1v1h-1zM217 374h1v1h-1zM219 374h1v1h-1zM121 375h1v1h-1zM122 375h1v1h-1zM126 375h1v1h-1zM128 375h1v1h-1zM131 375h1v1h-1zM133 375h1v1h-1zM136 375h1v1h-1zM139 375h1v1h-1zM146 375h1v1h-1zM147 375h1v1h-1zM149 375h1v1h-1zM151 375h1v1h-1zM154 375h1v1h-1zM155 375h1v1h-1zM156 375h1v1h-1zM160 375h1v1h-1zM161 375h1v1h-1zM164 375h1v1h-1zM166 375h1v1h-1zM168 375h1v1h-1zM172 375h1v1h-1zM173 375h1v1h-1zM174 375h1v1h-1zM177 375h1v1h-1zM178 375h1v1h-1zM180 375h1v1h-1zM184 375h1v1h-1zM185 375h1v1h-1zM186 375h1v1h-1zM187 375h1v1h-1zM189 375h1v1h-1zM194 375h1v1h-1zM195 375h1v1h-1zM196 375h1v1h-1zM203 375h1v1h-1zM206 375h1v1h-1zM209 375h1v1h-1zM212 375h1v1h-1zM213 375h1v1h-1zM118 376h1v1h-1zM120 376h1v1h-1zM122 376h1v1h-1zM124 376h1v1h-1zM125 376h1v1h-1zM126 376h1v1h-1zM134 376h1v1h-1zM136 376h1v1h-1zM137 376h1v1h-1zM140 376h1v1h-1zM141 376h1v1h-1zM146 376h1v1h-1zM154 376h1v1h-1zM155 376h1v1h-1zM160 376h1v1h-1zM162 376h1v1h-1zM163 376h1v1h-1zM165 376h1v1h-1zM166 376h1v1h-1zM168 376h1v1h-1zM169 376h1v1h-1zM170 376h1v1h-1zM179 376h1v1h-1zM180 376h1v1h-1zM181 376h1v1h-1zM183 376h1v1h-1zM185 376h1v1h-1zM188 376h1v1h-1zM190 376h1v1h-1zM191 376h1v1h-1zM193 376h1v1h-1zM197 376h1v1h-1zM198 376h1v1h-1zM199 376h1v1h-1zM201 376h1v1h-1zM207 376h1v1h-1zM212 376h1v1h-1zM213 376h1v1h-1zM118 377h1v1h-1zM125 377h1v1h-1zM127 377h1v1h-1zM128 377h1v1h-1zM130 377h1v1h-1zM138 377h1v1h-1zM141 377h1v1h-1zM145 377h1v1h-1zM149 377h1v1h-1zM154 377h1v1h-1zM155 377h1v1h-1zM156 377h1v1h-1zM159 377h1v1h-1zM164 377h1v1h-1zM165 377h1v1h-1zM166 377h1v1h-1zM167 377h1v1h-1zM169 377h1v1h-1zM170 377h1v1h-1zM172 377h1v1h-1zM178 377h1v1h-1zM180 377h1v1h-1zM181 377h1v1h-1zM182 377h1v1h-1zM183 377h1v1h-1zM186 377h1v1h-1zM187 377h1v1h-1zM188 377h1v1h-1zM191 377h1v1h-1zM193 377h1v1h-1zM196 377h1v1h-1zM197 377h1v1h-1zM198 377h1v1h-1zM204 377h1v1h-1zM206 377h1v1h-1zM208 377h1v1h-1zM211 377h1v1h-1zM215 377h1v1h-1zM217 377h1v1h-1zM113 378h1v1h-1zM119 378h1v1h-1zM120 378h1v1h-1zM121 378h1v1h-1zM122 378h1v1h-1zM131 378h1v1h-1zM134 378h1v1h-1zM136 378h1v1h-1zM138 378h1v1h-1zM139 378h1v1h-1zM141 378h1v1h-1zM142 378h1v1h-1zM143 378h1v1h-1zM146 378h1v1h-1zM147 378h1v1h-1zM152 378h1v1h-1zM155 378h1v1h-1zM159 378h1v1h-1zM161 378h1v1h-1zM165 378h1v1h-1zM166 378h1v1h-1zM171 378h1v1h-1zM172 378h1v1h-1zM176 378h1v1h-1zM178 378h1v1h-1zM179 378h1v1h-1zM180 378h1v1h-1zM181 378h1v1h-1zM185 378h1v1h-1zM190 378h1v1h-1zM191 378h1v1h-1zM192 378h1v1h-1zM195 378h1v1h-1zM196 378h1v1h-1zM201 378h1v1h-1zM204 378h1v1h-1zM205 378h1v1h-1zM206 378h1v1h-1zM207 378h1v1h-1zM211 378h1v1h-1zM212 378h1v1h-1zM214 378h1v1h-1zM110 379h1v1h-1zM113 379h1v1h-1zM123 379h1v1h-1zM126 379h1v1h-1zM131 379h1v1h-1zM137 379h1v1h-1zM140 379h1v1h-1zM143 379h1v1h-1zM149 379h1v1h-1zM152 379h1v1h-1zM154 379h1v1h-1zM157 379h1v1h-1zM161 379h1v1h-1zM165 379h1v1h-1zM166 379h1v1h-1zM167 379h1v1h-1zM171 379h1v1h-1zM173 379h1v1h-1zM174 379h1v1h-1zM175 379h1v1h-1zM177 379h1v1h-1zM178 379h1v1h-1zM179 379h1v1h-1zM180 379h1v1h-1zM181 379h1v1h-1zM186 379h1v1h-1zM187 379h1v1h-1zM189 379h1v1h-1zM190 379h1v1h-1zM191 379h1v1h-1zM192 379h1v1h-1zM194 379h1v1h-1zM196 379h1v1h-1zM198 379h1v1h-1zM201 379h1v1h-1zM206 379h1v1h-1zM207 379h1v1h-1zM209 379h1v1h-1zM210 379h1v1h-1zM213 379h1v1h-1zM215 379h1v1h-1zM109 380h1v1h-1zM111 380h1v1h-1zM112 380h1v1h-1zM114 380h1v1h-1zM117 380h1v1h-1zM118 380h1v1h-1zM119 380h1v1h-1zM125 380h1v1h-1zM128 380h1v1h-1zM129 380h1v1h-1zM132 380h1v1h-1zM133 380h1v1h-1zM138 380h1v1h-1zM141 380h1v1h-1zM144 380h1v1h-1zM147 380h1v1h-1zM148 380h1v1h-1zM150 380h1v1h-1zM153 380h1v1h-1zM154 380h1v1h-1zM156 380h1v1h-1zM164 380h1v1h-1zM166 380h1v1h-1zM170 380h1v1h-1zM175 380h1v1h-1zM177 380h1v1h-1zM179 380h1v1h-1zM181 380h1v1h-1zM182 380h1v1h-1zM184 380h1v1h-1zM185 380h1v1h-1zM186 380h1v1h-1zM187 380h1v1h-1zM188 380h1v1h-1zM192 380h1v1h-1zM194 380h1v1h-1zM196 380h1v1h-1zM197 380h1v1h-1zM199 380h1v1h-1zM214 380h1v1h-1zM215 380h1v1h-1zM110 381h1v1h-1zM115 381h1v1h-1zM117 381h1v1h-1zM120 381h1v1h-1zM123 381h1v1h-1zM124 381h1v1h-1zM126 381h1v1h-1zM128 381h1v1h-1zM133 381h1v1h-1zM137 381h1v1h-1zM138 381h1v1h-1zM139 381h1v1h-1zM144 381h1v1h-1zM145 381h1v1h-1zM147 381h1v1h-1zM148 381h1v1h-1zM151 381h1v1h-1zM153 381h1v1h-1zM155 381h1v1h-1zM158 381h1v1h-1zM159 381h1v1h-1zM169 381h1v1h-1zM173 381h1v1h-1zM174 381h1v1h-1zM177 381h1v1h-1zM178 381h1v1h-1zM180 381h1v1h-1zM182 381h1v1h-1zM183 381h1v1h-1zM184 381h1v1h-1zM185 381h1v1h-1zM186 381h1v1h-1zM187 381h1v1h-1zM190 381h1v1h-1zM193 381h1v1h-1zM195 381h1v1h-1zM202 381h1v1h-1zM207 381h1v1h-1zM209 381h1v1h-1zM211 381h1v1h-1zM212 381h1v1h-1zM213 381h1v1h-1zM111 382h1v1h-1zM113 382h1v1h-1zM114 382h1v1h-1zM115 382h1v1h-1zM120 382h1v1h-1zM125 382h1v1h-1zM127 382h1v1h-1zM128 382h1v1h-1zM130 382h1v1h-1zM131 382h1v1h-1zM133 382h1v1h-1zM135 382h1v1h-1zM136 382h1v1h-1zM138 382h1v1h-1zM139 382h1v1h-1zM140 382h1v1h-1zM142 382h1v1h-1zM144 382h1v1h-1zM145 382h1v1h-1zM146 382h1v1h-1zM149 382h1v1h-1zM150 382h1v1h-1zM151 382h1v1h-1zM155 382h1v1h-1zM156 382h1v1h-1zM159 382h1v1h-1zM160 382h1v1h-1zM161 382h1v1h-1zM162 382h1v1h-1zM163 382h1v1h-1zM164 382h1v1h-1zM165 382h1v1h-1zM167 382h1v1h-1zM168 382h1v1h-1zM169 382h1v1h-1zM170 382h1v1h-1zM172 382h1v1h-1zM173 382h1v1h-1zM175 382h1v1h-1zM177 382h1v1h-1zM179 382h1v1h-1zM180 382h1v1h-1zM181 382h1v1h-1zM182 382h1v1h-1zM183 382h1v1h-1zM184 382h1v1h-1zM185 382h1v1h-1zM189 382h1v1h-1zM190 382h1v1h-1zM197 382h1v1h-1zM200 382h1v1h-1zM203 382h1v1h-1zM204 382h1v1h-1zM206 382h1v1h-1zM214 382h1v1h-1zM109 383h1v1h-1zM112 383h1v1h-1zM115 383h1v1h-1zM118 383h1v1h-1zM120 383h1v1h-1zM126 383h1v1h-1zM127 383h1v1h-1zM128 383h1v1h-1zM130 383h1v1h-1zM131 383h1v1h-1zM136 383h1v1h-1zM137 383h1v1h-1zM139 383h1v1h-1zM140 383h1v1h-1zM141 383h1v1h-1zM142 383h1v1h-1zM143 383h1v1h-1zM144 383h1v1h-1zM145 383h1v1h-1zM146 383h1v1h-1zM148 383h1v1h-1zM151 383h1v1h-1zM152 383h1v1h-1zM153 383h1v1h-1zM155 383h1v1h-1zM156 383h1v1h-1zM161 383h1v1h-1zM162 383h1v1h-1zM163 383h1v1h-1zM167 383h1v1h-1zM168 383h1v1h-1zM171 383h1v1h-1zM172 383h1v1h-1zM177 383h1v1h-1zM178 383h1v1h-1zM181 383h1v1h-1zM188 383h1v1h-1zM189 383h1v1h-1zM190 383h1v1h-1zM192 383h1v1h-1zM193 383h1v1h-1zM194 383h1v1h-1zM195 383h1v1h-1zM196 383h1v1h-1zM201 383h1v1h-1zM202 383h1v1h-1zM203 383h1v1h-1zM205 383h1v1h-1zM206 383h1v1h-1zM210 383h1v1h-1zM213 383h1v1h-1zM110 384h1v1h-1zM112 384h1v1h-1zM119 384h1v1h-1zM120 384h1v1h-1zM122 384h1v1h-1zM123 384h1v1h-1zM125 384h1v1h-1zM128 384h1v1h-1zM130 384h1v1h-1zM131 384h1v1h-1zM132 384h1v1h-1zM134 384h1v1h-1zM135 384h1v1h-1zM136 384h1v1h-1zM138 384h1v1h-1zM140 384h1v1h-1zM141 384h1v1h-1zM142 384h1v1h-1zM145 384h1v1h-1zM148 384h1v1h-1zM150 384h1v1h-1zM153 384h1v1h-1zM154 384h1v1h-1zM156 384h1v1h-1zM157 384h1v1h-1zM158 384h1v1h-1zM160 384h1v1h-1zM163 384h1v1h-1zM167 384h1v1h-1zM169 384h1v1h-1zM171 384h1v1h-1zM172 384h1v1h-1zM174 384h1v1h-1zM175 384h1v1h-1zM176 384h1v1h-1zM180 384h1v1h-1zM181 384h1v1h-1zM182 384h1v1h-1zM183 384h1v1h-1zM185 384h1v1h-1zM187 384h1v1h-1zM190 384h1v1h-1zM194 384h1v1h-1zM199 384h1v1h-1zM200 384h1v1h-1zM201 384h1v1h-1zM207 384h1v1h-1zM210 384h1v1h-1zM213 384h1v1h-1zM116 385h1v1h-1zM120 385h1v1h-1zM121 385h1v1h-1zM122 385h1v1h-1zM123 385h1v1h-1zM127 385h1v1h-1zM131 385h1v1h-1zM132 385h1v1h-1zM133 385h1v1h-1zM134 385h1v1h-1zM135 385h1v1h-1zM141 385h1v1h-1zM142 385h1v1h-1zM145 385h1v1h-1zM146 385h1v1h-1zM149 385h1v1h-1zM150 385h1v1h-1zM153 385h1v1h-1zM154 385h1v1h-1zM155 385h1v1h-1zM156 385h1v1h-1zM160 385h1v1h-1zM163 385h1v1h-1zM164 385h1v1h-1zM165 385h1v1h-1zM166 385h1v1h-1zM167 385h1v1h-1zM170 385h1v1h-1zM171 385h1v1h-1zM176 385h1v1h-1zM177 385h1v1h-1zM178 385h1v1h-1zM180 385h1v1h-1zM183 385h1v1h-1zM185 385h1v1h-1zM186 385h1v1h-1zM189 385h1v1h-1zM190 385h1v1h-1zM192 385h1v1h-1zM195 385h1v1h-1zM197 385h1v1h-1zM200 385h1v1h-1zM208 385h1v1h-1zM209 385h1v1h-1zM212 385h1v1h-1zM112 386h1v1h-1zM113 386h1v1h-1zM115 386h1v1h-1zM116 386h1v1h-1zM117 386h1v1h-1zM119 386h1v1h-1zM121 386h1v1h-1zM123 386h1v1h-1zM124 386h1v1h-1zM125 386h1v1h-1zM126 386h1v1h-1zM128 386h1v1h-1zM129 386h1v1h-1zM130 386h1v1h-1zM132 386h1v1h-1zM139 386h1v1h-1zM140 386h1v1h-1zM141 386h1v1h-1zM154 386h1v1h-1zM156 386h1v1h-1zM160 386h1v1h-1zM163 386h1v1h-1zM164 386h1v1h-1zM165 386h1v1h-1zM166 386h1v1h-1zM167 386h1v1h-1zM170 386h1v1h-1zM171 386h1v1h-1zM172 386h1v1h-1zM173 386h1v1h-1zM174 386h1v1h-1zM175 386h1v1h-1zM176 386h1v1h-1zM178 386h1v1h-1zM179 386h1v1h-1zM180 386h1v1h-1zM181 386h1v1h-1zM182 386h1v1h-1zM183 386h1v1h-1zM185 386h1v1h-1zM188 386h1v1h-1zM192 386h1v1h-1zM193 386h1v1h-1zM196 386h1v1h-1zM197 386h1v1h-1zM198 386h1v1h-1zM203 386h1v1h-1zM204 386h1v1h-1zM207 386h1v1h-1zM208 386h1v1h-1zM209 386h1v1h-1zM211 386h1v1h-1zM111 387h1v1h-1zM114 387h1v1h-1zM115 387h1v1h-1zM119 387h1v1h-1zM120 387h1v1h-1zM123 387h1v1h-1zM124 387h1v1h-1zM125 387h1v1h-1zM126 387h1v1h-1zM127 387h1v1h-1zM128 387h1v1h-1zM129 387h1v1h-1zM130 387h1v1h-1zM131 387h1v1h-1zM132 387h1v1h-1zM133 387h1v1h-1zM135 387h1v1h-1zM136 387h1v1h-1zM137 387h1v1h-1zM138 387h1v1h-1zM143 387h1v1h-1zM150 387h1v1h-1zM151 387h1v1h-1zM153 387h1v1h-1zM154 387h1v1h-1zM157 387h1v1h-1zM158 387h1v1h-1zM161 387h1v1h-1zM162 387h1v1h-1zM170 387h1v1h-1zM171 387h1v1h-1zM173 387h1v1h-1zM174 387h1v1h-1zM175 387h1v1h-1zM181 387h1v1h-1zM183 387h1v1h-1zM186 387h1v1h-1zM187 387h1v1h-1zM189 387h1v1h-1zM190 387h1v1h-1zM193 387h1v1h-1zM194 387h1v1h-1zM195 387h1v1h-1zM198 387h1v1h-1zM199 387h1v1h-1zM200 387h1v1h-1zM201 387h1v1h-1zM202 387h1v1h-1zM205 387h1v1h-1zM206 387h1v1h-1zM207 387h1v1h-1zM110 388h1v1h-1zM112 388h1v1h-1zM116 388h1v1h-1zM117 388h1v1h-1zM118 388h1v1h-1zM119 388h1v1h-1zM120 388h1v1h-1zM121 388h1v1h-1zM122 388h1v1h-1zM126 388h1v1h-1zM127 388h1v1h-1zM129 388h1v1h-1zM130 388h1v1h-1zM131 388h1v1h-1zM132 388h1v1h-1zM133 388h1v1h-1zM136 388h1v1h-1zM137 388h1v1h-1zM138 388h1v1h-1zM139 388h1v1h-1zM142 388h1v1h-1zM144 388h1v1h-1zM146 388h1v1h-1zM150 388h1v1h-1zM157 388h1v1h-1zM158 388h1v1h-1zM159 388h1v1h-1zM162 388h1v1h-1zM164 388h1v1h-1zM165 388h1v1h-1zM168 388h1v1h-1zM170 388h1v1h-1zM171 388h1v1h-1zM172 388h1v1h-1zM177 388h1v1h-1zM178 388h1v1h-1zM179 388h1v1h-1zM184 388h1v1h-1zM186 388h1v1h-1zM187 388h1v1h-1zM189 388h1v1h-1zM192 388h1v1h-1zM193 388h1v1h-1zM197 388h1v1h-1zM201 388h1v1h-1zM204 388h1v1h-1zM209 388h1v1h-1zM110 389h1v1h-1zM112 389h1v1h-1zM114 389h1v1h-1zM115 389h1v1h-1zM117 389h1v1h-1zM118 389h1v1h-1zM120 389h1v1h-1zM122 389h1v1h-1zM126 389h1v1h-1zM127 389h1v1h-1zM128 389h1v1h-1zM129 389h1v1h-1zM130 389h1v1h-1zM131 389h1v1h-1zM132 389h1v1h-1zM133 389h1v1h-1zM135 389h1v1h-1zM136 389h1v1h-1zM138 389h1v1h-1zM139 389h1v1h-1zM140 389h1v1h-1zM141 389h1v1h-1zM143 389h1v1h-1zM145 389h1v1h-1zM146 389h1v1h-1zM148 389h1v1h-1zM149 389h1v1h-1zM150 389h1v1h-1zM152 389h1v1h-1zM157 389h1v1h-1zM158 389h1v1h-1zM170 389h1v1h-1zM171 389h1v1h-1zM173 389h1v1h-1zM177 389h1v1h-1zM178 389h1v1h-1zM179 389h1v1h-1zM180 389h1v1h-1zM184 389h1v1h-1zM190 389h1v1h-1zM191 389h1v1h-1zM193 389h1v1h-1zM203 389h1v1h-1zM205 389h1v1h-1zM206 389h1v1h-1zM208 389h1v1h-1zM111 390h1v1h-1zM113 390h1v1h-1zM114 390h1v1h-1zM115 390h1v1h-1zM117 390h1v1h-1zM124 390h1v1h-1zM126 390h1v1h-1zM127 390h1v1h-1zM128 390h1v1h-1zM129 390h1v1h-1zM130 390h1v1h-1zM131 390h1v1h-1zM132 390h1v1h-1zM133 390h1v1h-1zM134 390h1v1h-1zM135 390h1v1h-1zM136 390h1v1h-1zM137 390h1v1h-1zM138 390h1v1h-1zM139 390h1v1h-1zM140 390h1v1h-1zM143 390h1v1h-1zM145 390h1v1h-1zM146 390h1v1h-1zM147 390h1v1h-1zM149 390h1v1h-1zM150 390h1v1h-1zM151 390h1v1h-1zM153 390h1v1h-1zM154 390h1v1h-1zM159 390h1v1h-1zM162 390h1v1h-1zM163 390h1v1h-1zM166 390h1v1h-1zM168 390h1v1h-1zM172 390h1v1h-1zM173 390h1v1h-1zM174 390h1v1h-1zM177 390h1v1h-1zM179 390h1v1h-1zM187 390h1v1h-1zM188 390h1v1h-1zM192 390h1v1h-1zM195 390h1v1h-1zM196 390h1v1h-1zM204 390h1v1h-1zM206 390h1v1h-1zM207 390h1v1h-1zM208 390h1v1h-1zM209 390h1v1h-1zM114 391h1v1h-1zM115 391h1v1h-1zM117 391h1v1h-1zM118 391h1v1h-1zM119 391h1v1h-1zM122 391h1v1h-1zM123 391h1v1h-1zM125 391h1v1h-1zM127 391h1v1h-1zM128 391h1v1h-1zM130 391h1v1h-1zM131 391h1v1h-1zM132 391h1v1h-1zM133 391h1v1h-1zM134 391h1v1h-1zM135 391h1v1h-1zM137 391h1v1h-1zM138 391h1v1h-1zM140 391h1v1h-1zM141 391h1v1h-1zM142 391h1v1h-1zM143 391h1v1h-1zM148 391h1v1h-1zM149 391h1v1h-1zM155 391h1v1h-1zM156 391h1v1h-1zM160 391h1v1h-1zM166 391h1v1h-1zM167 391h1v1h-1zM169 391h1v1h-1zM170 391h1v1h-1zM172 391h1v1h-1zM173 391h1v1h-1zM177 391h1v1h-1zM178 391h1v1h-1zM181 391h1v1h-1zM187 391h1v1h-1zM188 391h1v1h-1zM198 391h1v1h-1zM202 391h1v1h-1zM204 391h1v1h-1zM208 391h1v1h-1zM111 392h1v1h-1zM112 392h1v1h-1zM115 392h1v1h-1zM119 392h1v1h-1zM120 392h1v1h-1zM121 392h1v1h-1zM122 392h1v1h-1zM123 392h1v1h-1zM124 392h1v1h-1zM125 392h1v1h-1zM126 392h1v1h-1zM128 392h1v1h-1zM131 392h1v1h-1zM132 392h1v1h-1zM135 392h1v1h-1zM136 392h1v1h-1zM137 392h1v1h-1zM139 392h1v1h-1zM140 392h1v1h-1zM141 392h1v1h-1zM142 392h1v1h-1zM143 392h1v1h-1zM144 392h1v1h-1zM145 392h1v1h-1zM148 392h1v1h-1zM150 392h1v1h-1zM151 392h1v1h-1zM153 392h1v1h-1zM155 392h1v1h-1zM157 392h1v1h-1zM158 392h1v1h-1zM160 392h1v1h-1zM163 392h1v1h-1zM167 392h1v1h-1zM168 392h1v1h-1zM169 392h1v1h-1zM170 392h1v1h-1zM172 392h1v1h-1zM174 392h1v1h-1zM175 392h1v1h-1zM177 392h1v1h-1zM178 392h1v1h-1zM180 392h1v1h-1zM181 392h1v1h-1zM182 392h1v1h-1zM188 392h1v1h-1zM191 392h1v1h-1zM193 392h1v1h-1zM195 392h1v1h-1zM198 392h1v1h-1zM200 392h1v1h-1zM113 393h1v1h-1zM116 393h1v1h-1zM117 393h1v1h-1zM119 393h1v1h-1zM120 393h1v1h-1zM122 393h1v1h-1zM124 393h1v1h-1zM126 393h1v1h-1zM128 393h1v1h-1zM129 393h1v1h-1zM131 393h1v1h-1zM132 393h1v1h-1zM133 393h1v1h-1zM134 393h1v1h-1zM135 393h1v1h-1zM136 393h1v1h-1zM137 393h1v1h-1zM138 393h1v1h-1zM140 393h1v1h-1zM141 393h1v1h-1zM142 393h1v1h-1zM143 393h1v1h-1zM144 393h1v1h-1zM145 393h1v1h-1zM147 393h1v1h-1zM150 393h1v1h-1zM151 393h1v1h-1zM152 393h1v1h-1zM154 393h1v1h-1zM156 393h1v1h-1zM157 393h1v1h-1zM160 393h1v1h-1zM166 393h1v1h-1zM167 393h1v1h-1zM176 393h1v1h-1zM179 393h1v1h-1zM182 393h1v1h-1zM190 393h1v1h-1zM192 393h1v1h-1zM193 393h1v1h-1zM196 393h1v1h-1zM197 393h1v1h-1zM200 393h1v1h-1zM202 393h1v1h-1zM203 393h1v1h-1zM205 393h1v1h-1zM206 393h1v1h-1zM207 393h1v1h-1zM111 394h1v1h-1zM112 394h1v1h-1zM113 394h1v1h-1zM119 394h1v1h-1zM120 394h1v1h-1zM121 394h1v1h-1zM122 394h1v1h-1zM123 394h1v1h-1zM124 394h1v1h-1zM125 394h1v1h-1zM126 394h1v1h-1zM127 394h1v1h-1zM128 394h1v1h-1zM130 394h1v1h-1zM131 394h1v1h-1zM132 394h1v1h-1zM133 394h1v1h-1zM134 394h1v1h-1zM135 394h1v1h-1zM136 394h1v1h-1zM137 394h1v1h-1zM138 394h1v1h-1zM140 394h1v1h-1zM141 394h1v1h-1zM142 394h1v1h-1zM144 394h1v1h-1zM145 394h1v1h-1zM147 394h1v1h-1zM149 394h1v1h-1zM150 394h1v1h-1zM153 394h1v1h-1zM155 394h1v1h-1zM157 394h1v1h-1zM158 394h1v1h-1zM161 394h1v1h-1zM162 394h1v1h-1zM164 394h1v1h-1zM167 394h1v1h-1zM168 394h1v1h-1zM169 394h1v1h-1zM172 394h1v1h-1zM176 394h1v1h-1zM177 394h1v1h-1zM178 394h1v1h-1zM180 394h1v1h-1zM181 394h1v1h-1zM186 394h1v1h-1zM187 394h1v1h-1zM190 394h1v1h-1zM191 394h1v1h-1zM192 394h1v1h-1zM202 394h1v1h-1zM111 395h1v1h-1zM112 395h1v1h-1zM117 395h1v1h-1zM118 395h1v1h-1zM119 395h1v1h-1zM121 395h1v1h-1zM122 395h1v1h-1zM124 395h1v1h-1zM127 395h1v1h-1zM131 395h1v1h-1zM132 395h1v1h-1zM133 395h1v1h-1zM134 395h1v1h-1zM135 395h1v1h-1zM136 395h1v1h-1zM137 395h1v1h-1zM138 395h1v1h-1zM140 395h1v1h-1zM141 395h1v1h-1zM143 395h1v1h-1zM144 395h1v1h-1zM145 395h1v1h-1zM147 395h1v1h-1zM148 395h1v1h-1zM150 395h1v1h-1zM151 395h1v1h-1zM158 395h1v1h-1zM160 395h1v1h-1zM161 395h1v1h-1zM172 395h1v1h-1zM173 395h1v1h-1zM174 395h1v1h-1zM175 395h1v1h-1zM176 395h1v1h-1zM177 395h1v1h-1zM180 395h1v1h-1zM184 395h1v1h-1zM187 395h1v1h-1zM189 395h1v1h-1zM190 395h1v1h-1zM191 395h1v1h-1zM199 395h1v1h-1zM201 395h1v1h-1zM206 395h1v1h-1zM112 396h1v1h-1zM115 396h1v1h-1zM118 396h1v1h-1zM121 396h1v1h-1zM122 396h1v1h-1zM124 396h1v1h-1zM125 396h1v1h-1zM126 396h1v1h-1zM127 396h1v1h-1zM128 396h1v1h-1zM130 396h1v1h-1zM131 396h1v1h-1zM132 396h1v1h-1zM133 396h1v1h-1zM135 396h1v1h-1zM137 396h1v1h-1zM138 396h1v1h-1zM139 396h1v1h-1zM142 396h1v1h-1zM143 396h1v1h-1zM144 396h1v1h-1zM145 396h1v1h-1zM149 396h1v1h-1zM150 396h1v1h-1zM151 396h1v1h-1zM152 396h1v1h-1zM160 396h1v1h-1zM163 396h1v1h-1zM167 396h1v1h-1zM168 396h1v1h-1zM169 396h1v1h-1zM170 396h1v1h-1zM172 396h1v1h-1zM179 396h1v1h-1zM180 396h1v1h-1zM182 396h1v1h-1zM183 396h1v1h-1zM191 396h1v1h-1zM193 396h1v1h-1zM195 396h1v1h-1zM198 396h1v1h-1zM199 396h1v1h-1zM204 396h1v1h-1zM205 396h1v1h-1zM113 397h1v1h-1zM114 397h1v1h-1zM116 397h1v1h-1zM118 397h1v1h-1zM119 397h1v1h-1zM123 397h1v1h-1zM124 397h1v1h-1zM125 397h1v1h-1zM126 397h1v1h-1zM127 397h1v1h-1zM128 397h1v1h-1zM129 397h1v1h-1zM130 397h1v1h-1zM131 397h1v1h-1zM132 397h1v1h-1zM134 397h1v1h-1zM135 397h1v1h-1zM136 397h1v1h-1zM137 397h1v1h-1zM138 397h1v1h-1zM139 397h1v1h-1zM140 397h1v1h-1zM141 397h1v1h-1zM145 397h1v1h-1zM146 397h1v1h-1zM147 397h1v1h-1zM150 397h1v1h-1zM152 397h1v1h-1zM153 397h1v1h-1zM155 397h1v1h-1zM156 397h1v1h-1zM157 397h1v1h-1zM165 397h1v1h-1zM170 397h1v1h-1zM173 397h1v1h-1zM175 397h1v1h-1zM176 397h1v1h-1zM180 397h1v1h-1zM184 397h1v1h-1zM187 397h1v1h-1zM188 397h1v1h-1zM190 397h1v1h-1zM114 398h1v1h-1zM120 398h1v1h-1zM121 398h1v1h-1zM122 398h1v1h-1zM124 398h1v1h-1zM125 398h1v1h-1zM126 398h1v1h-1zM127 398h1v1h-1zM128 398h1v1h-1zM129 398h1v1h-1zM130 398h1v1h-1zM132 398h1v1h-1zM134 398h1v1h-1zM135 398h1v1h-1zM136 398h1v1h-1zM138 398h1v1h-1zM139 398h1v1h-1zM140 398h1v1h-1zM141 398h1v1h-1zM147 398h1v1h-1zM148 398h1v1h-1zM149 398h1v1h-1zM152 398h1v1h-1zM156 398h1v1h-1zM166 398h1v1h-1zM167 398h1v1h-1zM168 398h1v1h-1zM169 398h1v1h-1zM174 398h1v1h-1zM175 398h1v1h-1zM178 398h1v1h-1zM181 398h1v1h-1zM182 398h1v1h-1zM187 398h1v1h-1zM191 398h1v1h-1zM115 399h1v1h-1zM120 399h1v1h-1zM121 399h1v1h-1zM122 399h1v1h-1zM124 399h1v1h-1zM125 399h1v1h-1zM126 399h1v1h-1zM129 399h1v1h-1zM131 399h1v1h-1zM133 399h1v1h-1zM134 399h1v1h-1zM135 399h1v1h-1zM136 399h1v1h-1zM137 399h1v1h-1zM138 399h1v1h-1zM139 399h1v1h-1zM141 399h1v1h-1zM142 399h1v1h-1zM143 399h1v1h-1zM144 399h1v1h-1zM145 399h1v1h-1zM147 399h1v1h-1zM150 399h1v1h-1zM153 399h1v1h-1zM156 399h1v1h-1zM164 399h1v1h-1zM165 399h1v1h-1zM170 399h1v1h-1zM172 399h1v1h-1zM173 399h1v1h-1zM174 399h1v1h-1zM177 399h1v1h-1zM181 399h1v1h-1zM182 399h1v1h-1zM183 399h1v1h-1zM184 399h1v1h-1zM185 399h1v1h-1zM114 400h1v1h-1zM117 400h1v1h-1zM119 400h1v1h-1zM120 400h1v1h-1zM121 400h1v1h-1zM123 400h1v1h-1zM125 400h1v1h-1zM126 400h1v1h-1zM129 400h1v1h-1zM130 400h1v1h-1zM131 400h1v1h-1zM132 400h1v1h-1zM135 400h1v1h-1zM138 400h1v1h-1zM139 400h1v1h-1zM144 400h1v1h-1zM145 400h1v1h-1zM148 400h1v1h-1zM149 400h1v1h-1zM150 400h1v1h-1zM154 400h1v1h-1zM163 400h1v1h-1zM168 400h1v1h-1zM173 400h1v1h-1zM177 400h1v1h-1zM115 401h1v1h-1zM118 401h1v1h-1zM119 401h1v1h-1zM120 401h1v1h-1zM121 401h1v1h-1zM122 401h1v1h-1zM123 401h1v1h-1zM124 401h1v1h-1zM126 401h1v1h-1zM127 401h1v1h-1zM129 401h1v1h-1zM130 401h1v1h-1zM131 401h1v1h-1zM132 401h1v1h-1zM133 401h1v1h-1zM134 401h1v1h-1zM135 401h1v1h-1zM136 401h1v1h-1zM137 401h1v1h-1zM138 401h1v1h-1zM139 401h1v1h-1zM143 401h1v1h-1zM147 401h1v1h-1zM148 401h1v1h-1zM150 401h1v1h-1zM152 401h1v1h-1zM155 401h1v1h-1zM156 401h1v1h-1zM161 401h1v1h-1zM167 401h1v1h-1zM170 401h1v1h-1zM171 401h1v1h-1zM117 402h1v1h-1zM118 402h1v1h-1zM119 402h1v1h-1zM121 402h1v1h-1zM123 402h1v1h-1zM124 402h1v1h-1zM127 402h1v1h-1zM129 402h1v1h-1zM130 402h1v1h-1zM131 402h1v1h-1zM133 402h1v1h-1zM134 402h1v1h-1zM135 402h1v1h-1zM138 402h1v1h-1zM141 402h1v1h-1zM142 402h1v1h-1zM143 402h1v1h-1zM144 402h1v1h-1zM145 402h1v1h-1zM147 402h1v1h-1zM152 402h1v1h-1zM153 402h1v1h-1zM157 402h1v1h-1zM159 402h1v1h-1zM160 402h1v1h-1zM161 402h1v1h-1zM117 403h1v1h-1zM118 403h1v1h-1zM121 403h1v1h-1zM122 403h1v1h-1zM123 403h1v1h-1zM124 403h1v1h-1zM125 403h1v1h-1zM127 403h1v1h-1zM128 403h1v1h-1zM130 403h1v1h-1zM133 403h1v1h-1zM134 403h1v1h-1zM135 403h1v1h-1zM136 403h1v1h-1zM137 403h1v1h-1zM138 403h1v1h-1zM139 403h1v1h-1zM142 403h1v1h-1zM146 403h1v1h-1zM147 403h1v1h-1zM150 403h1v1h-1zM154 403h1v1h-1zM121 404h1v1h-1zM124 404h1v1h-1zM129 404h1v1h-1zM130 404h1v1h-1zM133 404h1v1h-1zM135 404h1v1h-1zM138 404h1v1h-1zM139 404h1v1h-1zM140 404h1v1h-1zM143 404h1v1h-1zM148 404h1v1h-1zM122 405h1v1h-1zM124 405h1v1h-1zM128 405h1v1h-1zM129 405h1v1h-1zM134 405h1v1h-1zM137 405h1v1h-1zM138 405h1v1h-1zM139 405h1v1h-1zM146 405h1v1h-1zM124 406h1v1h-1zM125 406h1v1h-1zM126 406h1v1h-1zM131 406h1v1h-1zM134 406h1v1h-1zM140 406h1v1h-1zM122 407h1v1h-1zM124 407h1v1h-1zM127 407h1v1h-1zM128 407h1v1h-1zM132 407h1v1h-1zM125 408h1v1h-1z" fill="#FF0000"/>
<path d="M185 363h1v1h-1zM178 368h1v1h-1zM208 368h1v1h-1zM178 369h1v1h-1zM196 371h1v1h-1zM118 373h1v1h-1zM135 373h1v1h-1zM195 374h1v1h-1zM196 374h1v1h-1zM183 375h1v1h-1zM198 375h1v1h-1zM195 376h1v1h-1zM203 377h1v1h-1zM163 378h1v1h-1zM193 378h1v1h-1zM199 378h1v1h-1zM199 379h1v1h-1zM205 379h1v1h-1zM190 380h1v1h-1zM170 381h1v1h-1zM179 381h1v1h-1zM196 381h1v1h-1zM201 381h1v1h-1zM191 382h1v1h-1zM195 382h1v1h-1zM196 382h1v1h-1zM201 382h1v1h-1zM129 383h1v1h-1zM179 383h1v1h-1zM182 383h1v1h-1zM186 383h1v1h-1zM187 383h1v1h-1zM184 384h1v1h-1zM188 384h1v1h-1zM189 384h1v1h-1zM195 384h1v1h-1zM139 385h1v1h-1zM181 385h1v1h-1zM196 385h1v1h-1zM203 385h1v1h-1zM111 386h1v1h-1zM161 386h1v1h-1zM176 387h1v1h-1zM179 387h1v1h-1zM185 387h1v1h-1zM192 387h1v1h-1zM196 387h1v1h-1zM141 388h1v1h-1zM174 388h1v1h-1zM200 388h1v1h-1zM210 388h1v1h-1zM168 389h1v1h-1zM182 389h1v1h-1zM188 389h1v1h-1zM189 389h1v1h-1zM197 389h1v1h-1zM199 389h1v1h-1zM202 389h1v1h-1zM181 390h1v1h-1zM184 390h1v1h-1zM185 390h1v1h-1zM203 390h1v1h-1zM176 391h1v1h-1zM180 391h1v1h-1zM193 391h1v1h-1zM201 391h1v1h-1zM186 392h1v1h-1zM202 392h1v1h-1zM121 393h1v1h-1zM139 393h1v1h-1zM184 393h1v1h-1zM185 393h1v1h-1zM187 393h1v1h-1zM204 393h1v1h-1zM195 394h1v1h-1zM115 395h1v1h-1zM179 395h1v1h-1zM188 395h1v1h-1zM196 395h1v1h-1zM183 397h1v1h-1zM131 398h1v1h-1zM123 399h1v1h-1zM116 400h1v1h-1zM160 400h1v1h-1z" fill="#00E0F0"/>
<path d="M173 350h1v1h-1zM185 353h1v1h-1zM192 358h1v1h-1zM157 359h1v1h-1zM169 359h1v1h-1zM209 361h1v1h-1zM210 363h1v1h-1zM141 367h1v1h-1zM186 368h1v1h-1zM151 369h1v1h-1zM154 369h1v1h-1zM197 371h1v1h-1zM209 371h1v1h-1zM183 372h1v1h-1zM186 372h1v1h-1zM160 374h1v1h-1zM181 375h1v1h-1zM200 375h1v1h-1zM159 376h1v1h-1zM173 376h1v1h-1zM176 377h1v1h-1zM185 377h1v1h-1zM189 377h1v1h-1zM174 378h1v1h-1zM187 378h1v1h-1zM124 379h1v1h-1zM138 379h1v1h-1zM141 379h1v1h-1zM156 379h1v1h-1zM183 379h1v1h-1zM167 380h1v1h-1zM168 380h1v1h-1zM169 380h1v1h-1zM183 380h1v1h-1zM208 380h1v1h-1zM116 381h1v1h-1zM176 381h1v1h-1zM181 381h1v1h-1zM192 381h1v1h-1zM198 381h1v1h-1zM176 382h1v1h-1zM211 382h1v1h-1zM197 383h1v1h-1zM109 384h1v1h-1zM144 385h1v1h-1zM184 385h1v1h-1zM138 386h1v1h-1zM194 386h1v1h-1zM118 387h1v1h-1zM140 387h1v1h-1zM169 387h1v1h-1zM180 387h1v1h-1zM182 387h1v1h-1zM111 388h1v1h-1zM115 388h1v1h-1zM198 388h1v1h-1zM161 389h1v1h-1zM123 390h1v1h-1zM175 390h1v1h-1zM180 390h1v1h-1zM126 391h1v1h-1zM136 391h1v1h-1zM171 391h1v1h-1zM127 392h1v1h-1zM165 392h1v1h-1zM123 393h1v1h-1zM164 393h1v1h-1zM170 393h1v1h-1zM129 394h1v1h-1zM139 394h1v1h-1zM166 394h1v1h-1zM125 395h1v1h-1zM155 395h1v1h-1zM156 395h1v1h-1zM162 395h1v1h-1zM117 396h1v1h-1zM136 396h1v1h-1zM123 398h1v1h-1zM137 398h1v1h-1zM127 399h1v1h-1zM140 399h1v1h-1zM128 401h1v1h-1zM132 402h1v1h-1zM122 404h1v1h-1zM135 405h1v1h-1z" fill="#00B000"/>
<path d="M163 352h1v1h-1zM161 355h1v1h-1zM192 356h1v1h-1zM141 360h1v1h-1zM140 362h1v1h-1zM195 362h1v1h-1zM189 363h1v1h-1zM196 364h1v1h-1zM156 365h1v1h-1zM195 366h1v1h-1zM205 366h1v1h-1zM137 367h1v1h-1zM170 367h1v1h-1zM173 367h1v1h-1zM126 368h1v1h-1zM164 368h1v1h-1zM174 368h1v1h-1zM182 368h1v1h-1zM163 369h1v1h-1zM215 370h1v1h-1zM127 371h1v1h-1zM191 371h1v1h-1zM193 371h1v1h-1zM215 371h1v1h-1zM159 374h1v1h-1zM185 374h1v1h-1zM175 375h1v1h-1zM171 376h1v1h-1zM211 376h1v1h-1zM144 378h1v1h-1zM167 378h1v1h-1zM198 378h1v1h-1zM148 379h1v1h-1zM197 379h1v1h-1zM151 380h1v1h-1zM160 380h1v1h-1zM202 380h1v1h-1zM125 381h1v1h-1zM194 381h1v1h-1zM192 384h1v1h-1zM196 384h1v1h-1zM202 384h1v1h-1zM205 384h1v1h-1zM111 385h1v1h-1zM138 385h1v1h-1zM133 386h1v1h-1zM134 386h1v1h-1zM149 386h1v1h-1zM190 386h1v1h-1zM195 386h1v1h-1zM184 387h1v1h-1zM113 388h1v1h-1zM124 388h1v1h-1zM113 389h1v1h-1zM125 389h1v1h-1zM164 390h1v1h-1zM189 390h1v1h-1zM194 390h1v1h-1zM124 391h1v1h-1zM129 391h1v1h-1zM154 391h1v1h-1zM183 391h1v1h-1zM185 391h1v1h-1zM191 391h1v1h-1zM130 392h1v1h-1zM125 393h1v1h-1zM146 393h1v1h-1zM189 393h1v1h-1zM116 394h1v1h-1zM152 394h1v1h-1zM163 394h1v1h-1zM200 394h1v1h-1zM123 395h1v1h-1zM129 395h1v1h-1zM193 395h1v1h-1zM129 396h1v1h-1zM141 396h1v1h-1zM113 398h1v1h-1zM144 398h1v1h-1zM178 399h1v1h-1zM151 402h1v1h-1zM132 404h1v1h-1zM126 408h1v1h-1z" fill="#FF00FF"/>
</g>
<polygon points="108.9,379.8 136.6,358.8 168.6,349.3 197.3,354.4 227.8,361.4 206.2,396.4 124.4,409 111.1,398.6" fill="none" stroke="#FF0000" stroke-width="1.1" shape-rendering="crispEdges"/>
<rect x="77" y="237" width="195" height="1" fill="#000"/>
<rect x="77" y="237" width="2" height="180" fill="#000"/>
<rect x="77" y="415" width="195" height="2" fill="#000"/>
<rect x="271" y="237" width="1" height="180" fill="#000"/>
<path d="M74 415.5h3v1h-3zM75.5 404.8h1.5v1h-1.5zM75.5 393.6h1.5v1h-1.5zM75.5 382.4h1.5v1h-1.5zM74 370.8h3v1h-3zM75.5 360.1h1.5v1h-1.5zM75.5 348.9h1.5v1h-1.5zM75.5 337.7h1.5v1h-1.5zM74 326.0h3v1h-3zM75.5 315.3h1.5v1h-1.5zM75.5 304.1h1.5v1h-1.5zM75.5 292.9h1.5v1h-1.5zM74 281.2h3v1h-3zM75.5 270.6h1.5v1h-1.5zM75.5 259.4h1.5v1h-1.5zM75.5 248.2h1.5v1h-1.5zM74 236.5h3v1h-3zM78.0 417h1v4h-1zM90.2 417h1v2h-1zM102.3 417h1v2h-1zM114.5 417h1v2h-1zM126.6 417h1v4h-1zM138.8 417h1v2h-1zM150.9 417h1v2h-1zM163.1 417h1v2h-1zM175.2 417h1v4h-1zM187.3 417h1v2h-1zM199.5 417h1v2h-1zM211.6 417h1v2h-1zM223.8 417h1v4h-1zM236.0 417h1v2h-1zM248.1 417h1v2h-1zM260.2 417h1v2h-1zM272.4 417h1v4h-1z" fill="#000"/>
<text x="71.5" y="419.3" font-size="9" text-anchor="end" textLength="4.75" lengthAdjust="spacingAndGlyphs">0</text>
<text x="71.5" y="374.6" font-size="9" text-anchor="end" textLength="23.75" lengthAdjust="spacingAndGlyphs">65536</text>
<text x="71.5" y="329.8" font-size="9" text-anchor="end" textLength="28.5" lengthAdjust="spacingAndGlyphs">131072</text>
<text x="71.5" y="285.1" font-size="9" text-anchor="end" textLength="28.5" lengthAdjust="spacingAndGlyphs">196608</text>
<text x="71.5" y="240.3" font-size="9" text-anchor="end" textLength="28.5" lengthAdjust="spacingAndGlyphs">262144</text>
<clipPath id="c1"><rect x="0" y="0" width="278.6" height="485"/></clipPath>
<text x="77.6" y="430.7" font-size="9" text-anchor="middle" textLength="4.75" lengthAdjust="spacingAndGlyphs" clip-path="url(#c1)">0</text>
<text x="126.2" y="430.7" font-size="9" text-anchor="middle" textLength="23.75" lengthAdjust="spacingAndGlyphs" clip-path="url(#c1)">65536</text>
<text x="174.8" y="430.7" font-size="9" text-anchor="middle" textLength="28.5" lengthAdjust="spacingAndGlyphs" clip-path="url(#c1)">131072</text>
<text x="223.4" y="430.7" font-size="9" text-anchor="middle" textLength="28.5" lengthAdjust="spacingAndGlyphs" clip-path="url(#c1)">196608</text>
<text x="272.0" y="430.7" font-size="9" text-anchor="middle" textLength="28.5" lengthAdjust="spacingAndGlyphs" clip-path="url(#c1)">262144</text>
<text x="149.2" y="339.8" font-size="12" fill="#FF0000" textLength="36.4" lengthAdjust="spacingAndGlyphs">scatter</text>
<filter id="blur1" x="-20%" y="-50%" width="140%" height="200%"><feGaussianBlur stdDeviation="1.2"/></filter>
<rect x="92" y="213" width="120" height="15" fill="#000" opacity="0.28" filter="url(#blur1)"/><rect x="89.5" y="210.5" width="120" height="15" fill="#C8C8C8" stroke="#000"/><text x="91.8" y="221" font-size="9.6" fill="#000" textLength="113.3" lengthAdjust="spacing">Sample 2.fcs compensated</text>
<rect x="364" y="218" width="120" height="15" fill="#000" opacity="0.28" filter="url(#blur1)"/><rect x="361.5" y="215.5" width="120" height="15" fill="#C8C8C8" stroke="#000"/><text x="363.8" y="226" font-size="9.6" fill="#000" textLength="113.3" lengthAdjust="spacing">Sample 2.fcs compensated</text>
<text x="29.6" y="161.5" font-size="11" fill="#000" textLength="62.5" lengthAdjust="spacing">Experiment:</text>
<text x="97" y="161.5" font-size="11" font-weight="bold" fill="#0A0AE6" textLength="255" lengthAdjust="spacing">B cell imm unophenotyping study #A245-6AD</text>
<filter id="dblur" x="-5%" y="-5%" width="110%" height="110%"><feGaussianBlur stdDeviation="0.55"/></filter><g filter="url(#dblur)">
<path d="M458 287h1v1h-1zM463 287h5v1h-5zM449 288h2v1h-2zM458 288h2v1h-2zM462 288h3v1h-3zM448 289h4v1h-4zM454 289h1v1h-1zM459 289h1v1h-1zM463 289h2v1h-2zM468 289h3v1h-3zM448 290h7v1h-7zM465 290h7v1h-7zM448 291h7v1h-7zM464 291h10v1h-10zM448 292h3v1h-3zM453 292h3v1h-3zM464 292h9v1h-9zM447 293h3v1h-3zM453 293h5v1h-5zM463 293h9v1h-9zM438 294h1v1h-1zM445 294h6v1h-6zM453 294h15v1h-15zM469 294h3v1h-3zM438 295h1v1h-1zM443 295h20v1h-20zM467 295h1v1h-1zM473 295h2v1h-2zM436 296h3v1h-3zM443 296h20v1h-20zM473 296h3v1h-3zM435 297h5v1h-5zM443 297h20v1h-20zM469 297h1v1h-1zM474 297h2v1h-2zM435 298h28v1h-28zM467 298h4v1h-4zM435 299h4v1h-4zM440 299h24v1h-24zM466 299h6v1h-6zM436 300h36v1h-36zM478 300h1v1h-1zM437 301h35v1h-35zM437 302h9v1h-9zM448 302h25v1h-25zM437 303h15v1h-15zM453 303h21v1h-21zM437 304h12v1h-12zM451 304h24v1h-24zM437 305h12v1h-12zM451 305h24v1h-24zM434 306h1v1h-1zM436 306h14v1h-14zM451 306h24v1h-24zM480 306h1v1h-1zM431 307h50v1h-50zM430 308h19v1h-19zM450 308h30v1h-30zM429 309h51v1h-51zM430 310h49v1h-49zM430 311h49v1h-49zM483 311h1v1h-1zM430 312h49v1h-49zM483 312h1v1h-1zM430 313h1v1h-1zM432 313h1v1h-1zM434 313h45v1h-45zM483 313h1v1h-1zM429 314h1v1h-1zM432 314h18v1h-18zM452 314h27v1h-27zM432 315h18v1h-18zM451 315h28v1h-28zM433 316h26v1h-26zM460 316h19v1h-19zM433 317h46v1h-46zM433 318h4v1h-4zM440 318h39v1h-39zM434 319h1v1h-1zM440 319h38v1h-38zM440 320h40v1h-40zM440 321h41v1h-41zM442 322h39v1h-39zM442 323h39v1h-39zM442 324h35v1h-35zM442 325h35v1h-35zM443 326h35v1h-35zM436 327h3v1h-3zM440 327h1v1h-1zM443 327h8v1h-8zM452 327h26v1h-26zM435 328h43v1h-43zM436 329h43v1h-43zM436 330h43v1h-43zM436 331h16v1h-16zM454 331h25v1h-25zM437 332h4v1h-4zM443 332h8v1h-8zM455 332h1v1h-1zM457 332h23v1h-23zM438 333h2v1h-2zM445 333h6v1h-6zM457 333h12v1h-12zM470 333h4v1h-4zM476 333h4v1h-4zM446 334h5v1h-5zM454 334h27v1h-27zM441 335h1v1h-1zM446 335h36v1h-36zM447 336h36v1h-36zM488 336h6v1h-6zM450 337h18v1h-18zM469 337h25v1h-25zM446 338h2v1h-2zM450 338h31v1h-31zM482 338h13v1h-13zM446 339h3v1h-3zM451 339h27v1h-27zM480 339h16v1h-16zM446 340h2v1h-2zM451 340h18v1h-18zM470 340h8v1h-8zM480 340h15v1h-15zM445 341h4v1h-4zM451 341h45v1h-45zM498 341h1v1h-1zM445 342h4v1h-4zM451 342h48v1h-48zM444 343h6v1h-6zM452 343h13v1h-13zM466 343h34v1h-34zM438 344h2v1h-2zM442 344h9v1h-9zM452 344h47v1h-47zM436 345h61v1h-61zM436 346h61v1h-61zM431 347h2v1h-2zM436 347h62v1h-62zM428 348h5v1h-5zM436 348h62v1h-62zM428 349h69v1h-69zM427 350h70v1h-70zM424 351h73v1h-73zM421 352h75v1h-75zM420 353h72v1h-72zM414 354h3v1h-3zM420 354h71v1h-71zM413 355h3v1h-3zM420 355h69v1h-69zM412 356h4v1h-4zM420 356h67v1h-67zM410 357h4v1h-4zM419 357h67v1h-67zM409 358h5v1h-5zM419 358h63v1h-63zM408 359h7v1h-7zM418 359h63v1h-63zM407 360h72v1h-72zM401 361h2v1h-2zM404 361h72v1h-72zM401 362h71v1h-71zM401 363h68v1h-68zM400 364h68v1h-68zM393 365h1v1h-1zM400 365h68v1h-68zM392 366h2v1h-2zM400 366h67v1h-67zM401 367h64v1h-64zM401 368h60v1h-60zM400 369h57v1h-57zM400 370h52v1h-52zM400 371h5v1h-5zM407 371h45v1h-45zM400 372h5v1h-5zM407 372h44v1h-44zM401 373h28v1h-28zM433 373h15v1h-15zM405 374h21v1h-21zM434 374h13v1h-13zM407 375h12v1h-12zM421 375h3v1h-3zM435 375h3v1h-3zM439 375h3v1h-3zM407 376h10v1h-10zM407 377h2v1h-2zM414 377h3v1h-3zM414 378h2v1h-2zM414 379h2v1h-2z" fill="#C20000"/>
<path d="M458 287h1v1h-1zM463 287h2v1h-2zM458 288h2v1h-2zM462 288h2v1h-2zM448 289h2v1h-2zM454 289h1v1h-1zM459 289h1v1h-1zM448 290h4v1h-4zM469 290h1v1h-1zM448 291h6v1h-6zM470 291h4v1h-4zM449 292h2v1h-2zM453 292h1v1h-1zM456 293h2v1h-2zM464 293h3v1h-3zM456 294h5v1h-5zM464 294h4v1h-4zM443 295h1v1h-1zM454 295h1v1h-1zM461 295h1v1h-1zM467 295h1v1h-1zM453 296h2v1h-2zM474 296h1v1h-1zM435 297h3v1h-3zM452 297h3v1h-3zM435 298h3v1h-3zM451 298h5v1h-5zM435 299h3v1h-3zM451 299h5v1h-5zM436 300h2v1h-2zM452 300h5v1h-5zM471 300h1v1h-1zM478 300h1v1h-1zM437 301h1v1h-1zM455 301h9v1h-9zM469 301h3v1h-3zM455 302h6v1h-6zM463 302h2v1h-2zM469 302h4v1h-4zM455 303h6v1h-6zM469 303h3v1h-3zM455 304h6v1h-6zM464 304h2v1h-2zM469 304h3v1h-3zM452 305h1v1h-1zM456 305h4v1h-4zM465 305h1v1h-1zM452 306h1v1h-1zM468 307h2v1h-2zM474 307h3v1h-3zM444 308h3v1h-3zM457 308h1v1h-1zM468 308h2v1h-2zM474 308h3v1h-3zM435 309h1v1h-1zM443 309h5v1h-5zM451 309h7v1h-7zM469 309h4v1h-4zM474 309h2v1h-2zM442 310h15v1h-15zM469 310h7v1h-7zM442 311h16v1h-16zM464 311h1v1h-1zM471 311h2v1h-2zM483 311h1v1h-1zM443 312h7v1h-7zM452 312h6v1h-6zM463 312h2v1h-2zM471 312h4v1h-4zM483 312h1v1h-1zM438 313h3v1h-3zM444 313h6v1h-6zM453 313h5v1h-5zM460 313h1v1h-1zM462 313h3v1h-3zM472 313h3v1h-3zM483 313h1v1h-1zM439 314h1v1h-1zM445 314h4v1h-4zM453 314h5v1h-5zM463 314h1v1h-1zM471 314h4v1h-4zM432 315h2v1h-2zM447 315h2v1h-2zM455 315h2v1h-2zM471 315h5v1h-5zM442 316h2v1h-2zM447 316h2v1h-2zM470 316h7v1h-7zM442 317h3v1h-3zM446 317h3v1h-3zM470 317h7v1h-7zM441 318h3v1h-3zM445 318h3v1h-3zM451 318h2v1h-2zM469 318h8v1h-8zM440 319h2v1h-2zM445 319h3v1h-3zM469 319h8v1h-8zM440 320h1v1h-1zM444 320h4v1h-4zM460 320h3v1h-3zM466 320h4v1h-4zM471 320h6v1h-6zM440 321h1v1h-1zM444 321h4v1h-4zM461 321h1v1h-1zM467 321h1v1h-1zM473 321h4v1h-4zM444 322h4v1h-4zM452 322h1v1h-1zM456 322h1v1h-1zM473 322h4v1h-4zM445 323h3v1h-3zM451 323h2v1h-2zM463 323h1v1h-1zM442 324h1v1h-1zM444 324h4v1h-4zM463 324h1v1h-1zM466 324h2v1h-2zM442 325h2v1h-2zM445 325h3v1h-3zM458 325h1v1h-1zM466 325h6v1h-6zM445 326h3v1h-3zM458 326h1v1h-1zM463 326h1v1h-1zM465 326h8v1h-8zM474 326h3v1h-3zM446 327h2v1h-2zM457 327h2v1h-2zM464 327h9v1h-9zM475 327h1v1h-1zM435 328h2v1h-2zM447 328h1v1h-1zM457 328h2v1h-2zM465 328h8v1h-8zM436 329h2v1h-2zM447 329h1v1h-1zM449 329h1v1h-1zM465 329h6v1h-6zM447 330h1v1h-1zM456 330h1v1h-1zM465 330h5v1h-5zM447 331h1v1h-1zM465 331h3v1h-3zM472 331h1v1h-1zM438 332h1v1h-1zM444 332h1v1h-1zM447 332h1v1h-1zM460 332h1v1h-1zM465 332h2v1h-2zM471 332h2v1h-2zM477 332h1v1h-1zM438 333h2v1h-2zM445 333h3v1h-3zM465 333h2v1h-2zM472 333h1v1h-1zM477 333h2v1h-2zM446 334h3v1h-3zM450 334h1v1h-1zM466 334h1v1h-1zM475 334h3v1h-3zM446 335h5v1h-5zM455 335h1v1h-1zM461 335h1v1h-1zM463 335h1v1h-1zM475 335h1v1h-1zM447 336h3v1h-3zM453 336h3v1h-3zM459 336h4v1h-4zM464 336h2v1h-2zM473 336h5v1h-5zM488 336h3v1h-3zM492 336h2v1h-2zM453 337h3v1h-3zM459 337h4v1h-4zM464 337h2v1h-2zM472 337h6v1h-6zM487 337h3v1h-3zM446 338h2v1h-2zM452 338h2v1h-2zM459 338h3v1h-3zM473 338h3v1h-3zM488 338h2v1h-2zM494 338h1v1h-1zM446 339h2v1h-2zM459 339h3v1h-3zM482 339h8v1h-8zM493 339h2v1h-2zM455 340h2v1h-2zM481 340h10v1h-10zM480 341h12v1h-12zM457 342h3v1h-3zM462 342h2v1h-2zM480 342h12v1h-12zM445 343h1v1h-1zM455 343h10v1h-10zM480 343h13v1h-13zM498 343h1v1h-1zM443 344h1v1h-1zM445 344h2v1h-2zM454 344h17v1h-17zM478 344h15v1h-15zM436 345h1v1h-1zM454 345h40v1h-40zM436 346h7v1h-7zM454 346h41v1h-41zM436 347h6v1h-6zM452 347h1v1h-1zM454 347h41v1h-41zM450 348h3v1h-3zM454 348h41v1h-41zM496 348h1v1h-1zM429 349h1v1h-1zM443 349h1v1h-1zM448 349h41v1h-41zM491 349h5v1h-5zM440 350h5v1h-5zM447 350h42v1h-42zM439 351h6v1h-6zM447 351h42v1h-42zM429 352h2v1h-2zM439 352h6v1h-6zM447 352h43v1h-43zM427 353h2v1h-2zM438 353h7v1h-7zM447 353h41v1h-41zM426 354h3v1h-3zM435 354h50v1h-50zM426 355h4v1h-4zM434 355h49v1h-49zM412 356h1v1h-1zM426 356h55v1h-55zM412 357h1v1h-1zM427 357h53v1h-53zM422 358h3v1h-3zM426 358h53v1h-53zM421 359h55v1h-55zM413 360h1v1h-1zM420 360h54v1h-54zM476 360h3v1h-3zM402 361h1v1h-1zM413 361h2v1h-2zM420 361h51v1h-51zM413 362h1v1h-1zM416 362h53v1h-53zM403 363h1v1h-1zM417 363h51v1h-51zM402 364h1v1h-1zM411 364h4v1h-4zM416 364h51v1h-51zM393 365h1v1h-1zM402 365h63v1h-63zM392 366h2v1h-2zM403 366h58v1h-58zM404 367h53v1h-53zM464 367h1v1h-1zM405 368h48v1h-48zM455 368h1v1h-1zM410 369h41v1h-41zM410 370h29v1h-29zM411 371h10v1h-10zM424 371h1v1h-1zM428 371h8v1h-8zM411 372h8v1h-8zM427 372h3v1h-3zM447 372h1v1h-1zM449 372h2v1h-2zM404 373h1v1h-1zM411 373h6v1h-6zM418 373h1v1h-1zM428 373h1v1h-1zM435 373h1v1h-1zM444 373h3v1h-3zM418 374h1v1h-1zM421 374h2v1h-2zM436 374h1v1h-1zM440 374h2v1h-2zM445 374h2v1h-2zM422 375h1v1h-1zM436 375h2v1h-2zM439 375h3v1h-3zM407 376h1v1h-1zM407 377h1v1h-1zM415 378h1v1h-1zM414 379h2v1h-2z" fill="#F41200"/>
<path d="M484 341h4v1h-4zM483 342h5v1h-5zM483 343h6v1h-6zM482 344h8v1h-8zM482 345h10v1h-10zM466 346h2v1h-2zM470 346h9v1h-9zM481 346h12v1h-12zM466 347h22v1h-22zM458 348h3v1h-3zM463 348h23v1h-23zM456 349h27v1h-27zM484 349h2v1h-2zM456 350h26v1h-26zM485 350h1v1h-1zM450 351h32v1h-32zM449 352h33v1h-33zM441 353h2v1h-2zM448 353h34v1h-34zM441 354h3v1h-3zM447 354h34v1h-34zM440 355h41v1h-41zM436 356h44v1h-44zM434 357h44v1h-44zM433 358h43v1h-43zM431 359h43v1h-43zM423 360h49v1h-49zM422 361h47v1h-47zM421 362h47v1h-47zM420 363h47v1h-47zM418 364h47v1h-47zM417 365h44v1h-44zM417 366h40v1h-40zM417 367h36v1h-36zM417 368h34v1h-34zM416 369h6v1h-6zM423 369h17v1h-17zM417 370h2v1h-2zM429 370h6v1h-6z" fill="#FF7800"/>
<path d="M468 348h11v1h-11zM466 349h14v1h-14zM458 350h22v1h-22zM457 351h23v1h-23zM452 352h28v1h-28zM450 353h30v1h-30zM449 354h30v1h-30zM447 355h32v1h-32zM442 356h36v1h-36zM440 357h36v1h-36zM438 358h35v1h-35zM434 359h38v1h-38zM433 360h36v1h-36zM432 361h36v1h-36zM426 362h3v1h-3zM430 362h36v1h-36zM425 363h40v1h-40zM424 364h37v1h-37zM424 365h33v1h-33zM425 366h29v1h-29zM426 367h25v1h-25zM429 368h11v1h-11zM431 369h1v1h-1z" fill="#F2E400"/>
<path d="M473 349h1v1h-1zM467 350h10v1h-10zM460 351h18v1h-18zM458 352h20v1h-20zM454 353h24v1h-24zM452 354h26v1h-26zM450 355h27v1h-27zM448 356h27v1h-27zM445 357h28v1h-28zM443 358h29v1h-29zM440 359h29v1h-29zM438 360h29v1h-29zM437 361h29v1h-29zM435 362h28v1h-28zM434 363h26v1h-26zM433 364h24v1h-24zM433 365h21v1h-21zM434 366h8v1h-8zM445 366h1v1h-1z" fill="#BCE000"/>
<path d="M467 351h9v1h-9zM460 352h16v1h-16zM458 353h19v1h-19zM455 354h21v1h-21zM453 355h21v1h-21zM451 356h22v1h-22zM448 357h23v1h-23zM445 358h25v1h-25zM444 359h24v1h-24zM442 360h23v1h-23zM441 361h22v1h-22zM439 362h22v1h-22zM438 363h19v1h-19zM437 364h17v1h-17zM437 365h3v1h-3z" fill="#58B838"/>
<path d="M468 352h1v1h-1zM460 353h11v1h-11zM458 354h14v1h-14zM456 355h15v1h-15zM454 356h17v1h-17zM452 357h17v1h-17zM448 358h20v1h-20zM446 359h18v1h-18zM445 360h17v1h-17zM444 361h17v1h-17zM443 362h14v1h-14zM444 363h10v1h-10z" fill="#1E8C50"/>
<path d="M460 354h5v1h-5zM466 354h3v1h-3zM458 355h11v1h-11zM456 356h13v1h-13zM454 357h13v1h-13zM452 358h12v1h-12zM449 359h14v1h-14zM447 360h13v1h-13zM447 361h11v1h-11zM447 362h5v1h-5zM453 362h1v1h-1z" fill="#3A3AF2"/>
<path d="M459 355h5v1h-5zM457 356h9v1h-9zM456 357h8v1h-8zM454 358h9v1h-9zM453 359h8v1h-8zM450 360h8v1h-8z" fill="#A428F2"/>
</g>
<rect x="474" y="242" width="2" height="2" fill="#D00000"/>
<rect x="517" y="242" width="1" height="1" fill="#D00000"/>
<rect x="527" y="242" width="2" height="2" fill="#D00000"/>
<rect x="536" y="242" width="2" height="1" fill="#D00000"/>
<rect x="491" y="270" width="3" height="2" fill="#D00000"/>
<rect x="489" y="272" width="2" height="2" fill="#D00000"/>
<rect x="484" y="280" width="3" height="3" fill="#D00000"/>
<rect x="479" y="288" width="2" height="2" fill="#D00000"/>
<rect x="507" y="297" width="1" height="1" fill="#D00000"/>
<rect x="541" y="322" width="1" height="1" fill="#D00000"/>
<rect x="493" y="282" width="1" height="1" fill="#D00000"/>
<polygon points="414,296.5 466.9,274.5 485.3,301.8 476,328 412.4,345.8" fill="none" stroke="#22E622" stroke-width="1.1" shape-rendering="crispEdges"/>
<text x="400.5" y="262" font-size="11.5" fill="#33DD33" textLength="32.2" lengthAdjust="spacingAndGlyphs">B cells</text>
<text x="401" y="275" font-size="11.5" fill="#33DD33" textLength="38.4" lengthAdjust="spacingAndGlyphs">15.59%</text>
<rect x="343" y="242" width="2" height="176" fill="#000"/>
<rect x="343" y="416" width="202" height="2" fill="#000"/>
<path d="M339.5 259h4v1h-4zM339.5 301h4v1h-4zM339.5 351h4v1h-4zM341 288h2v1h-2zM341 281h2v1h-2zM341 276h2v1h-2zM341 272h2v1h-2zM341 268h2v1h-2zM341 266h2v1h-2zM341 263h2v1h-2zM341 261h2v1h-2zM341 336h2v1h-2zM341 327h2v1h-2zM341 321h2v1h-2zM341 316h2v1h-2zM341 312h2v1h-2zM341 309h2v1h-2zM341 306h2v1h-2zM341 303h2v1h-2zM341 353h2v1h-2zM341 355h2v1h-2zM341 357h2v1h-2zM341 359h2v1h-2zM341 361h2v1h-2zM341 363h2v1h-2zM341 365h2v1h-2zM341 366h2v1h-2zM341 368h2v1h-2zM341 370h2v1h-2zM341 372h2v1h-2zM341 374h2v1h-2zM341 376h2v1h-2zM341 378h2v1h-2zM341 380h2v1h-2zM341 382h2v1h-2zM339.5 385h4v1h-4z M340 367h3v1h-3zM392 418h1v4h-1zM419 418h1v4h-1zM474 418h1v4h-1zM525 418h1v4h-1zM436 418h1v2.5h-1zM445 418h1v2.5h-1zM452 418h1v2.5h-1zM457 418h1v2.5h-1zM462 418h1v2.5h-1zM465 418h1v2.5h-1zM469 418h1v2.5h-1zM471 418h1v2.5h-1zM489 418h1v2.5h-1zM498 418h1v2.5h-1zM505 418h1v2.5h-1zM510 418h1v2.5h-1zM514 418h1v2.5h-1zM517 418h1v2.5h-1zM520 418h1v2.5h-1zM523 418h1v2.5h-1zM396 418h1v2.5h-1zM399 418h1v2.5h-1zM401.5 418h1v2.5h-1zM404 418h1v2.5h-1zM411 418h1v2.5h-1zM414 418h1v2.5h-1zM417 418h1v2.5h-1zM405 418h3.5v3h-3.5z M431 418h1v3h-1z" fill="#000"/>
<text x="322.5" y="264" font-size="9" fill="#000" textLength="9.6" lengthAdjust="spacingAndGlyphs">10</text><text x="332.5" y="257.2" font-size="7" fill="#000">5</text>
<text x="322.5" y="306" font-size="9" fill="#000" textLength="9.6" lengthAdjust="spacingAndGlyphs">10</text><text x="332.5" y="299.2" font-size="7" fill="#000">4</text>
<text x="322.5" y="356" font-size="9" fill="#000" textLength="9.6" lengthAdjust="spacingAndGlyphs">10</text><text x="332.5" y="349.2" font-size="7" fill="#000">3</text>
<text x="319.2" y="373" font-size="9" fill="#000" textLength="12.9" lengthAdjust="spacingAndGlyphs">-10</text><text x="332.49999999999994" y="366.2" font-size="7" fill="#000">1</text>
<text x="319.2" y="390" font-size="9" fill="#000" textLength="12.9" lengthAdjust="spacingAndGlyphs">-10</text><text x="332.49999999999994" y="383.2" font-size="7" fill="#000">3</text>
<text x="383" y="437.8" font-size="9" fill="#000" textLength="12.9" lengthAdjust="spacingAndGlyphs">-10</text><text x="396.29999999999995" y="431.0" font-size="7" fill="#000">3</text>
<text x="412.8" y="437.8" font-size="9" fill="#000" textLength="9.6" lengthAdjust="spacingAndGlyphs">10</text><text x="422.8" y="431.0" font-size="7" fill="#000">3</text>
<text x="467.7" y="437.8" font-size="9" fill="#000" textLength="9.6" lengthAdjust="spacingAndGlyphs">10</text><text x="477.7" y="431.0" font-size="7" fill="#000">4</text>
<text x="518.9" y="437.8" font-size="9" fill="#000" textLength="9.6" lengthAdjust="spacingAndGlyphs">10</text><text x="528.9" y="431.0" font-size="7" fill="#000">5</text>
<rect x="570" y="245" width="154" height="240" fill="#E6E6E6"/>
<rect x="574" y="251" width="150" height="232" fill="#FFFFFF"/>
<rect x="579.5" y="255.5" width="8" height="8" rx="1" fill="#F8F8F8" stroke="#8A8A8A"/><rect x="581" y="259" width="5" height="1" fill="#2B4FA0"/>
<path d="M589 259.5h1M591 259.5h1M593 259.5h1" stroke="#999"/>
<rect x="596.5" y="252.5" width="15" height="15" fill="#FF0000" stroke="#111"/>
<text x="618" y="264.1" font-size="11" fill="#111" stroke="#111" stroke-width="0.2" textLength="34" lengthAdjust="spacingAndGlyphs" >scatter</text>
<rect x="597.5" y="273.5" width="8" height="8" rx="1" fill="#F8F8F8" stroke="#8A8A8A"/><rect x="599" y="277" width="5" height="1" fill="#2B4FA0"/>
<path d="M601.5 268v1M601.5 270v1M601.5 272v1" stroke="#999"/>
<path d="M607 277.5h1M609 277.5h1M611 277.5h1" stroke="#999"/>
<rect x="614.5" y="270.5" width="15" height="15" fill="#00FF00" stroke="#111"/>
<text x="636.5" y="281.8" font-size="11" fill="#111" stroke="#111" stroke-width="0.2" textLength="30.6" lengthAdjust="spacingAndGlyphs" >B cells</text>
<path d="M619.5 287v1M619.5 289v1M619.5 291v1M619.5 293v1M619.5 295v1M619.5 297v1M619.5 299v1M619.5 301v1M619.5 303v1M619.5 305v1M619.5 307v1M619.5 309v1M619.5 311v1M619.5 313v1M621 295.5h1M621 313.5h1M623 295.5h1M623 313.5h1M625 295.5h1M625 313.5h1M627 295.5h1M627 313.5h1M629 295.5h1M629 313.5h1" stroke="#999"/>
<rect x="632.5" y="288.5" width="15" height="15" fill="#00FFFF" stroke="#111"/>
<text x="654.2" y="299.8" font-size="11" fill="#111" stroke="#111" stroke-width="0.2" textLength="71.5" lengthAdjust="spacingAndGlyphs" >double positive</text>
<rect x="632.5" y="306.5" width="15" height="15" fill="#FF00FF" stroke="#111"/>
<text x="654.2" y="317.5" font-size="11" fill="#111" stroke="#111" stroke-width="0.2" textLength="78" lengthAdjust="spacingAndGlyphs" >double-negative</text>
<rect x="654" y="69" width="64" height="99" fill="#E6E6E6"/>
<rect x="654" y="69" width="64" height="27" fill="#F1F1F1"/>
<rect x="654.5" y="72.5" width="48" height="23" fill="#FFFFFF" stroke="#F2B395"/>
<rect x="702" y="72" width="14" height="24" fill="#C4C4C4"/>
<path d="M706 82.5 h5 l-2.5 2.5 z" fill="#333"/>
<rect x="657" y="75" width="7" height="15" fill="#3390F0"/>
<text x="657.2" y="88" font-size="12" fill="#fff" >2</text>
<rect x="654" y="96" width="62" height="63" fill="#FFFFFF"/>
<rect x="715" y="96" width="1" height="63" fill="#C8C8C8"/>
<rect x="654" y="158.5" width="62" height="1" fill="#C8C8C8"/>
<rect x="656" y="143" width="58" height="15" fill="#3390F0"/>
<text x="670.5" y="109.6" font-size="12" fill="#111" stroke="#111" stroke-width="0.2" >1</text>
<text x="670.5" y="124.64999999999999" font-size="12" fill="#111" stroke="#111" stroke-width="0.2" >2</text>
<text x="670.5" y="139.7" font-size="12" fill="#111" stroke="#111" stroke-width="0.2" >3</text>
<text x="670.5" y="154.75" font-size="12" fill="#fff" >4</text>
<path d="M649 64 H723 V173 H649 Z M654 69 V168 H718 V69 Z" fill="#E6151F" fill-rule="evenodd"/>
<path d="M698.5 148.5 V164.5 L702.3 160.8 L705.6 167 L708.2 165.8 L705.2 159.8 L710 159.8 Z" fill="#fff" stroke="#000" stroke-width="1" stroke-linejoin="miter"/>
</svg>
</body></html>
